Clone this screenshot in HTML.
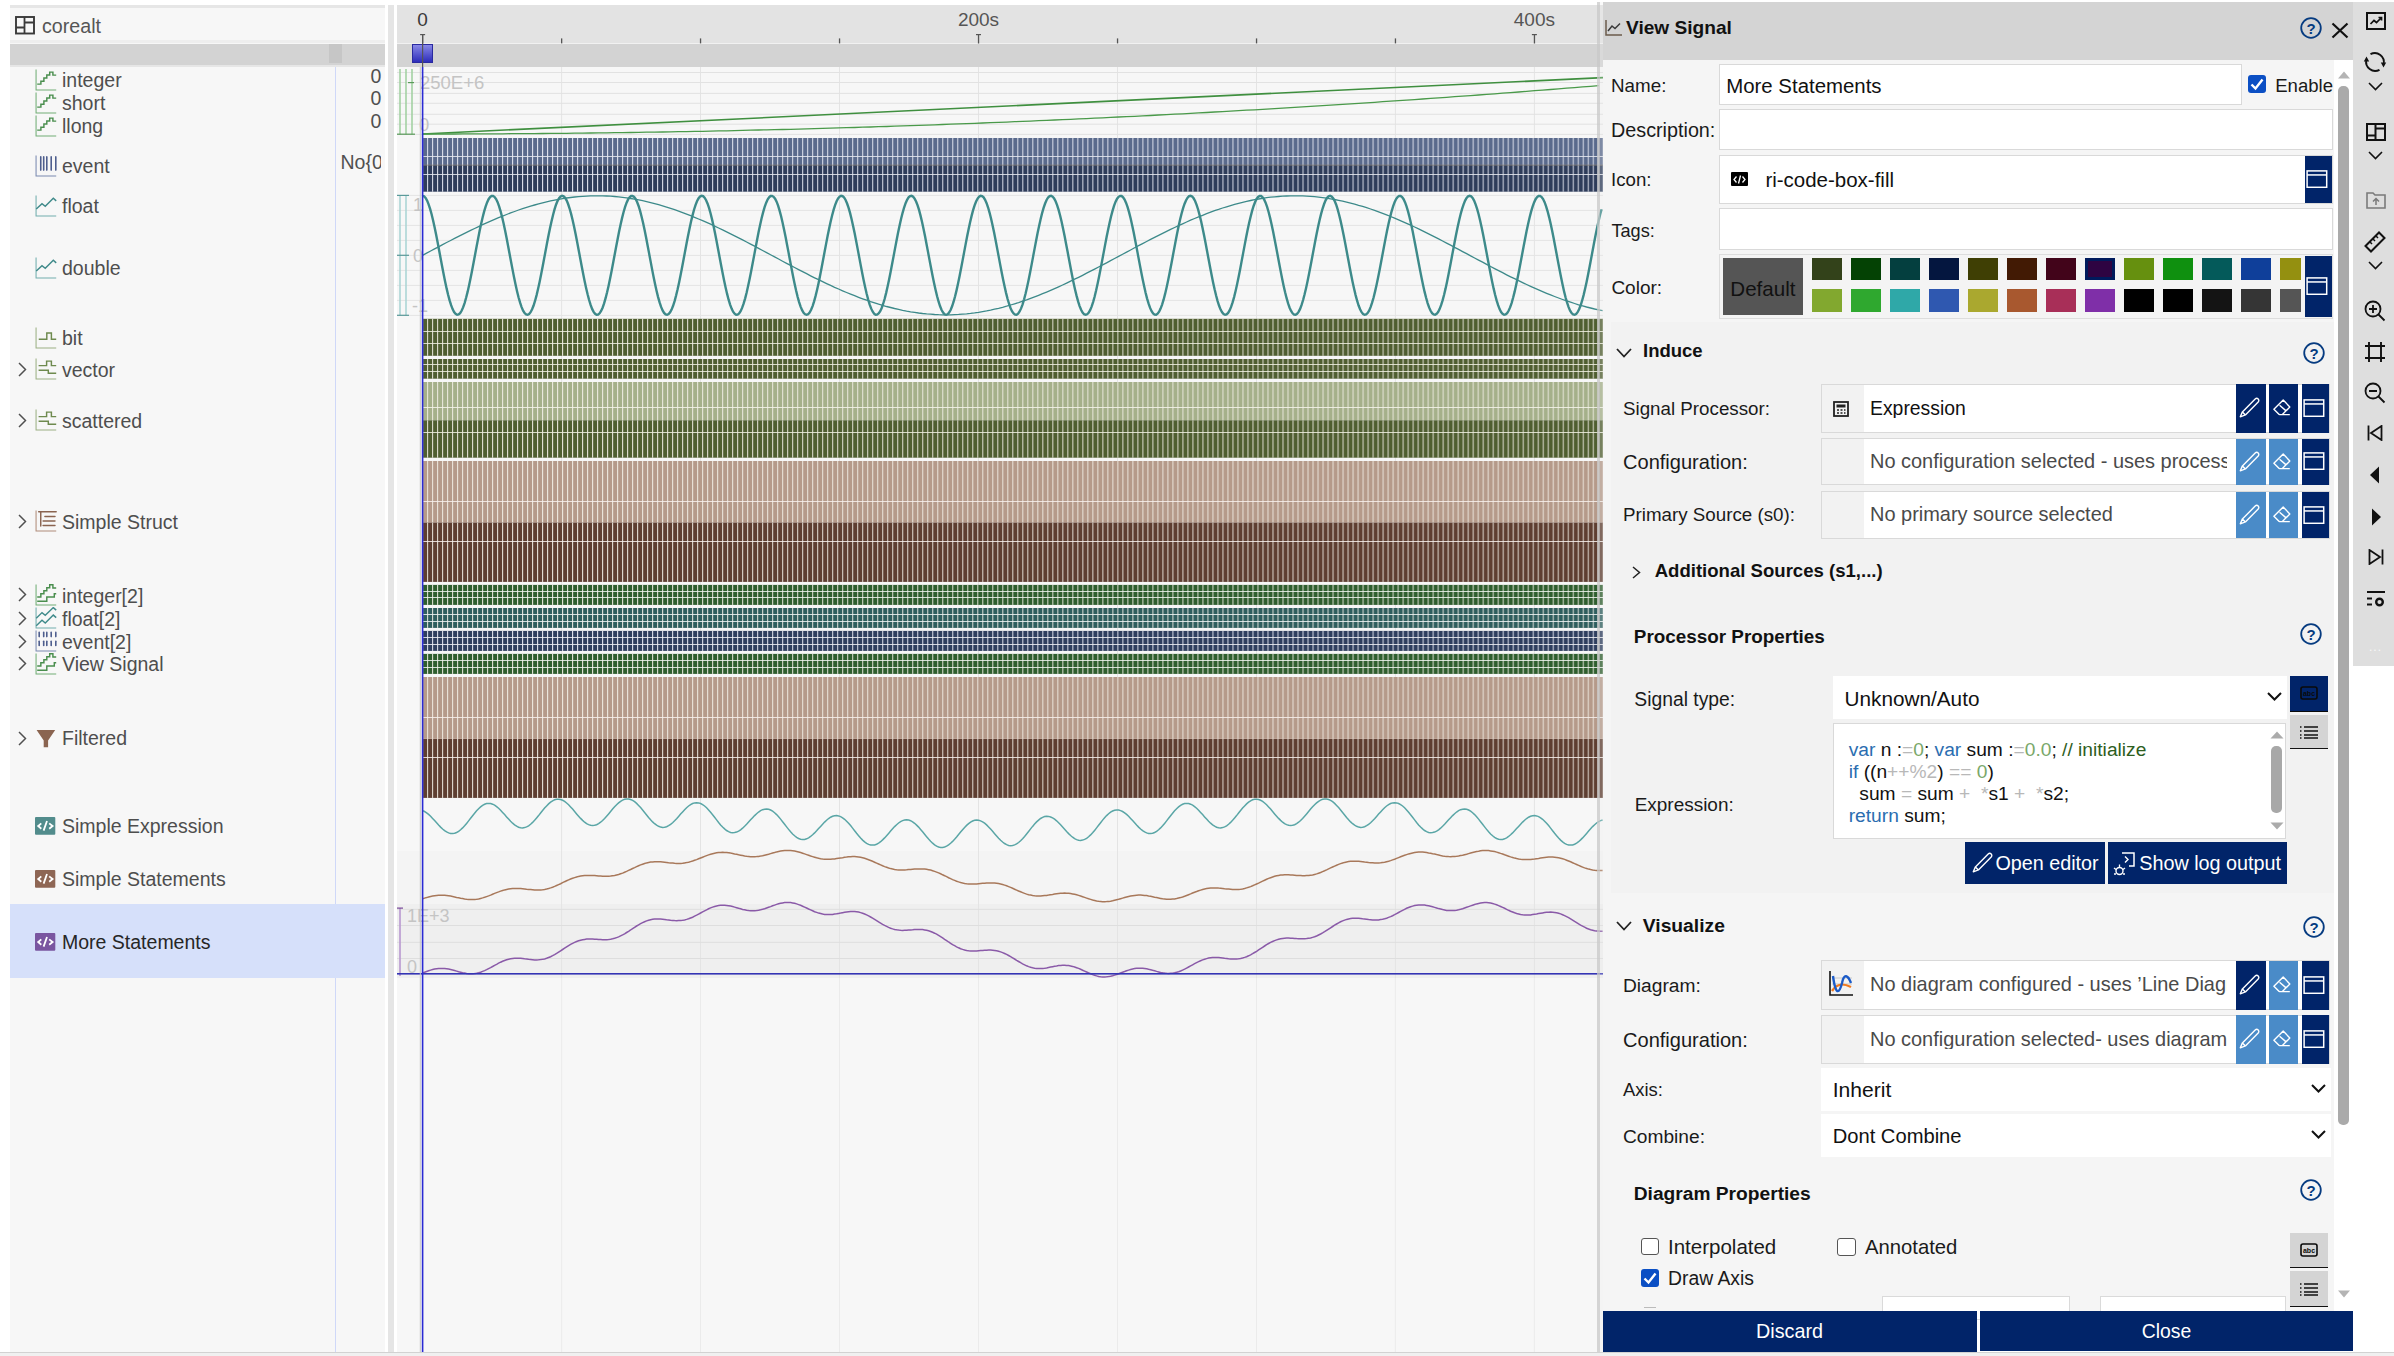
<!DOCTYPE html>
<html><head><meta charset="utf-8"><title>View Signal</title>
<style>
html,body{margin:0;padding:0;background:#ffffff;}
body{position:relative;width:2394px;height:1356px;overflow:hidden;font-family:"Liberation Sans", sans-serif;}
div{box-sizing:content-box;}
</style></head><body>
<div style="position:absolute;left:10px;top:5px;width:375.0px;height:1347.0px;background:#f7f7f7;"></div>
<div style="position:absolute;left:10px;top:5px;width:375.0px;height:3.0px;background:#e6e6e6;"></div>
<div style="position:absolute;left:10px;top:40px;width:375.0px;height:3.0px;background:#eeeeee;"></div>
<div style="position:absolute;left:10px;top:44px;width:375.0px;height:20.5px;background:#d3d3d3;"></div>
<div style="position:absolute;left:10px;top:64.5px;width:375.0px;height:2.5px;background:#e6e6e6;"></div>
<div style="position:absolute;left:329px;top:44px;width:13.0px;height:19.0px;background:#c6c6c6;"></div>
<svg style="position:absolute;left:14.5px;top:15.5px" width="20" height="19" viewBox="0 0 20 19" ><rect x="1" y="1" width="18" height="16.5" fill="none" stroke="#3a3a3a" stroke-width="1.9"/><path d="M9.5 1V17.5M1 11.5H9.5M9.5 6.5H19" fill="none" stroke="#3a3a3a" stroke-width="1.8"/></svg>
<div style="position:absolute;left:42.0px;top:16.6px;font-size:19.67px;line-height:19.67px;color:#555555;font-weight:normal;white-space:nowrap;">corealt</div>
<div style="position:absolute;left:335px;top:67px;width:1.0px;height:1285.0px;background:#cfd8f8;"></div>
<div style="position:absolute;left:10px;top:904px;width:375.0px;height:73.7px;background:#d6e0fa;"></div>
<svg style="position:absolute;left:34.5px;top:68.5px" width="22" height="22" viewBox="0 0 22 22" ><path d="M1.06 0.4V20.9H21.2" fill="none" stroke="#72ae76" stroke-width="1.05"/><path d="M2.2 15.1H5.9V12.3H8.9V9H11.8V5.9H14.7V3.1H17.9V6.1H21.2" fill="none" stroke="#4a8e4e" stroke-width="1.45"/></svg>
<div style="position:absolute;left:62px;top:71.1px;font-size:19.5px;line-height:19.5px;color:#4e4e4e;font-weight:normal;white-space:nowrap;">integer</div>
<svg style="position:absolute;left:34.5px;top:91.5px" width="22" height="22" viewBox="0 0 22 22" ><path d="M1.06 0.4V20.9H21.2" fill="none" stroke="#72ae76" stroke-width="1.05"/><path d="M2.2 15.1H5.9V12.3H8.9V9H11.8V5.9H14.7V3.1H17.9V6.1H21.2" fill="none" stroke="#4a8e4e" stroke-width="1.45"/></svg>
<div style="position:absolute;left:62px;top:94.2px;font-size:19.5px;line-height:19.5px;color:#4e4e4e;font-weight:normal;white-space:nowrap;">short</div>
<svg style="position:absolute;left:34.5px;top:114.5px" width="22" height="22" viewBox="0 0 22 22" ><path d="M1.06 0.4V20.9H21.2" fill="none" stroke="#72ae76" stroke-width="1.05"/><path d="M2.2 15.1H5.9V12.3H8.9V9H11.8V5.9H14.7V3.1H17.9V6.1H21.2" fill="none" stroke="#4a8e4e" stroke-width="1.45"/></svg>
<div style="position:absolute;left:62px;top:117.2px;font-size:19.5px;line-height:19.5px;color:#4e4e4e;font-weight:normal;white-space:nowrap;">llong</div>
<svg style="position:absolute;left:34.5px;top:154.5px" width="22" height="22" viewBox="0 0 22 22" ><path d="M1.06 0.4V20.9H21.2" fill="none" stroke="#7a8ab0" stroke-width="1.05"/><rect x="4.95" y="1.1" width="1.6" height="14.8" rx="0.8" fill="#4e5e8e"/><rect x="7.8999999999999995" y="1.1" width="1.6" height="14.8" rx="0.8" fill="#4e5e8e"/><rect x="11.0" y="1.1" width="1.6" height="14.8" rx="0.8" fill="#4e5e8e"/><rect x="15.399999999999999" y="1.1" width="1.6" height="14.8" rx="0.8" fill="#4e5e8e"/><rect x="20.0" y="1.1" width="1.6" height="14.8" rx="0.8" fill="#4e5e8e"/></svg>
<div style="position:absolute;left:62px;top:156.8px;font-size:19.5px;line-height:19.5px;color:#4e4e4e;font-weight:normal;white-space:nowrap;">event</div>
<svg style="position:absolute;left:34.5px;top:194.5px" width="22" height="22" viewBox="0 0 22 22" ><path d="M1.06 0.4V20.9H21.2" fill="none" stroke="#72aeae" stroke-width="1.05"/><path d="M1.25 14L7 8.6L10.26 11.3L18.3 3.25L21.2 5.9" fill="none" stroke="#3f8a8a" stroke-width="1.45"/></svg>
<div style="position:absolute;left:62px;top:197.4px;font-size:19.5px;line-height:19.5px;color:#4e4e4e;font-weight:normal;white-space:nowrap;">float</div>
<svg style="position:absolute;left:34.5px;top:256.5px" width="22" height="22" viewBox="0 0 22 22" ><path d="M1.06 0.4V20.9H21.2" fill="none" stroke="#72aeae" stroke-width="1.05"/><path d="M1.25 14L7 8.6L10.26 11.3L18.3 3.25L21.2 5.9" fill="none" stroke="#3f8a8a" stroke-width="1.45"/></svg>
<div style="position:absolute;left:62px;top:258.7px;font-size:19.5px;line-height:19.5px;color:#4e4e4e;font-weight:normal;white-space:nowrap;">double</div>
<svg style="position:absolute;left:34.5px;top:326.5px" width="22" height="22" viewBox="0 0 22 22" ><path d="M1.06 0.4V20.9H21.2" fill="none" stroke="#9cb084" stroke-width="1.05"/><path d="M3.74 12.26H11.8V5.9H16.4V12.26H21.2" fill="none" stroke="#6e8a4e" stroke-width="1.45"/></svg>
<div style="position:absolute;left:62px;top:328.8px;font-size:19.5px;line-height:19.5px;color:#4e4e4e;font-weight:normal;white-space:nowrap;">bit</div>
<svg style="position:absolute;left:34.5px;top:358.4px" width="22" height="22" viewBox="0 0 22 22" ><path d="M1.06 0.4V20.9H21.2" fill="none" stroke="#9cb084" stroke-width="1.05"/><path d="M3.6 7.6H11.6V3.1H16.4V7.6H21.2M3.6 12.3H13.3V15.3H21.2" fill="none" stroke="#6e8a4e" stroke-width="1.45"/></svg>
<svg style="position:absolute;left:17.5px;top:362.0px" width="9" height="15" viewBox="0 0 9 15" ><path d="M1 1L7.5 7.5L1 14" fill="none" stroke="#505050" stroke-width="1.45"/></svg>
<div style="position:absolute;left:62px;top:361.0px;font-size:19.5px;line-height:19.5px;color:#4e4e4e;font-weight:normal;white-space:nowrap;">vector</div>
<svg style="position:absolute;left:34.5px;top:409.2px" width="22" height="22" viewBox="0 0 22 22" ><path d="M1.06 0.4V20.9H21.2" fill="none" stroke="#9cb084" stroke-width="1.05"/><path d="M3.6 7.6H11.6V3.1H16.4V7.6H21.2M3.6 12.3H13.3V15.3H21.2" fill="none" stroke="#6e8a4e" stroke-width="1.45"/></svg>
<svg style="position:absolute;left:17.5px;top:412.8px" width="9" height="15" viewBox="0 0 9 15" ><path d="M1 1L7.5 7.5L1 14" fill="none" stroke="#505050" stroke-width="1.45"/></svg>
<div style="position:absolute;left:62px;top:411.7px;font-size:19.5px;line-height:19.5px;color:#4e4e4e;font-weight:normal;white-space:nowrap;">scattered</div>
<svg style="position:absolute;left:34.5px;top:510.3px" width="22" height="22" viewBox="0 0 22 22" ><path d="M1.06 0.4V20.9H21.2" fill="none" stroke="#b08c7a" stroke-width="1.05"/><path d="M3.7 1.7H21.2M5.75 1.7V15.9M9.9 6.4H20M8.1 10.9H20M8.1 15.5H20" fill="none" stroke="#8a6450" stroke-width="1.45" stroke-linecap="round"/></svg>
<svg style="position:absolute;left:17.5px;top:513.9px" width="9" height="15" viewBox="0 0 9 15" ><path d="M1 1L7.5 7.5L1 14" fill="none" stroke="#505050" stroke-width="1.45"/></svg>
<div style="position:absolute;left:62px;top:513.3px;font-size:19.5px;line-height:19.5px;color:#4e4e4e;font-weight:normal;white-space:nowrap;">Simple Struct</div>
<svg style="position:absolute;left:34.5px;top:583.8px" width="22" height="22" viewBox="0 0 22 22" ><path d="M1.06 0.4V20.9H21.2" fill="none" stroke="#72ae76" stroke-width="1.05"/><path d="M2.2 12.9H5.85V9.7H8.9V6.8H11.8V3.7H14.7V0.8H17.9V3.9H21.2M2.2 17.3H11.8V12.9H19.3V9.7H21.2" fill="none" stroke="#4a8e4e" stroke-width="1.45"/></svg>
<svg style="position:absolute;left:17.5px;top:587.4px" width="9" height="15" viewBox="0 0 9 15" ><path d="M1 1L7.5 7.5L1 14" fill="none" stroke="#505050" stroke-width="1.45"/></svg>
<div style="position:absolute;left:62px;top:586.5px;font-size:19.5px;line-height:19.5px;color:#4e4e4e;font-weight:normal;white-space:nowrap;">integer[2]</div>
<svg style="position:absolute;left:34.5px;top:607px" width="22" height="22" viewBox="0 0 22 22" ><path d="M1.06 0.4V20.9H21.2" fill="none" stroke="#72aeae" stroke-width="1.05"/><path d="M1.25 11.2L7 5.6L10.26 8.3L18.3 0.6L21.2 3.1M1.25 18.7L7 13.3L10.26 16L18.3 8.1L21.2 10.6" fill="none" stroke="#3f8a8a" stroke-width="1.45"/></svg>
<svg style="position:absolute;left:17.5px;top:610.6px" width="9" height="15" viewBox="0 0 9 15" ><path d="M1 1L7.5 7.5L1 14" fill="none" stroke="#505050" stroke-width="1.45"/></svg>
<div style="position:absolute;left:62px;top:610.1px;font-size:19.5px;line-height:19.5px;color:#4e4e4e;font-weight:normal;white-space:nowrap;">float[2]</div>
<svg style="position:absolute;left:34.5px;top:630px" width="22" height="22" viewBox="0 0 22 22" ><path d="M1.06 0.4V20.9H21.2" fill="none" stroke="#7a8ab0" stroke-width="1.05"/><rect x="3.4000000000000004" y="1.6" width="1.6" height="5.8" rx="0.8" fill="#4e5e8e"/><rect x="3.4000000000000004" y="10.4" width="1.6" height="5.8" rx="0.8" fill="#4e5e8e"/><rect x="7.8999999999999995" y="1.6" width="1.6" height="5.8" rx="0.8" fill="#4e5e8e"/><rect x="7.8999999999999995" y="10.4" width="1.6" height="5.8" rx="0.8" fill="#4e5e8e"/><rect x="11.0" y="1.6" width="1.6" height="5.8" rx="0.8" fill="#4e5e8e"/><rect x="11.0" y="10.4" width="1.6" height="5.8" rx="0.8" fill="#4e5e8e"/><rect x="15.399999999999999" y="1.6" width="1.6" height="5.8" rx="0.8" fill="#4e5e8e"/><rect x="15.399999999999999" y="10.4" width="1.6" height="5.8" rx="0.8" fill="#4e5e8e"/><rect x="20.0" y="1.6" width="1.6" height="5.8" rx="0.8" fill="#4e5e8e"/><rect x="20.0" y="10.4" width="1.6" height="5.8" rx="0.8" fill="#4e5e8e"/></svg>
<svg style="position:absolute;left:17.5px;top:633.6px" width="9" height="15" viewBox="0 0 9 15" ><path d="M1 1L7.5 7.5L1 14" fill="none" stroke="#505050" stroke-width="1.45"/></svg>
<div style="position:absolute;left:62px;top:632.6px;font-size:19.5px;line-height:19.5px;color:#4e4e4e;font-weight:normal;white-space:nowrap;">event[2]</div>
<svg style="position:absolute;left:34.5px;top:652.5px" width="22" height="22" viewBox="0 0 22 22" ><path d="M1.06 0.4V20.9H21.2" fill="none" stroke="#72ae76" stroke-width="1.05"/><path d="M2.2 12.9H5.85V9.7H8.9V6.8H11.8V3.7H14.7V0.8H17.9V3.9H21.2M2.2 17.3H11.8V12.9H19.3V9.7H21.2" fill="none" stroke="#4a8e4e" stroke-width="1.45"/></svg>
<svg style="position:absolute;left:17.5px;top:656.1px" width="9" height="15" viewBox="0 0 9 15" ><path d="M1 1L7.5 7.5L1 14" fill="none" stroke="#505050" stroke-width="1.45"/></svg>
<div style="position:absolute;left:62px;top:655.3px;font-size:19.5px;line-height:19.5px;color:#4e4e4e;font-weight:normal;white-space:nowrap;">View Signal</div>
<svg style="position:absolute;left:35.5px;top:729.3px" width="20" height="19" viewBox="0 0 20 19" ><path d="M0.6 1.1H19.2L12.1 11.6V18.3H7.7V11.6Z" fill="#8a6450"/></svg>
<svg style="position:absolute;left:17.5px;top:731.2px" width="9" height="15" viewBox="0 0 9 15" ><path d="M1 1L7.5 7.5L1 14" fill="none" stroke="#505050" stroke-width="1.45"/></svg>
<div style="position:absolute;left:62px;top:729.3px;font-size:19.5px;line-height:19.5px;color:#4e4e4e;font-weight:normal;white-space:nowrap;">Filtered</div>
<svg style="position:absolute;left:35.2px;top:817px" width="21" height="18" viewBox="0 0 21 18" ><rect x="0" y="0" width="20.3" height="17.8" rx="1" fill="#528c8c"/><path d="M6.3 6.35L3.2 9L6.3 11.7M14.2 6.35L17.6 9L14.2 11.7M12 4L8.6 13.6" fill="none" stroke="#fff" stroke-width="1.8"/></svg>
<div style="position:absolute;left:62px;top:817.0px;font-size:19.5px;line-height:19.5px;color:#4e4e4e;font-weight:normal;white-space:nowrap;">Simple Expression</div>
<svg style="position:absolute;left:35.2px;top:870px" width="21" height="18" viewBox="0 0 21 18" ><rect x="0" y="0" width="20.3" height="17.8" rx="1" fill="#8e6654"/><path d="M6.3 6.35L3.2 9L6.3 11.7M14.2 6.35L17.6 9L14.2 11.7M12 4L8.6 13.6" fill="none" stroke="#fff" stroke-width="1.8"/></svg>
<div style="position:absolute;left:62px;top:869.7px;font-size:19.5px;line-height:19.5px;color:#4e4e4e;font-weight:normal;white-space:nowrap;">Simple Statements</div>
<svg style="position:absolute;left:35.2px;top:932.7px" width="21" height="18" viewBox="0 0 21 18" ><rect x="0" y="0" width="20.3" height="17.8" rx="1" fill="#7a56a0"/><path d="M6.3 6.35L3.2 9L6.3 11.7M14.2 6.35L17.6 9L14.2 11.7M12 4L8.6 13.6" fill="none" stroke="#fff" stroke-width="1.8"/></svg>
<div style="position:absolute;left:62px;top:932.7px;font-size:19.5px;line-height:19.5px;color:#262626;font-weight:normal;white-space:nowrap;">More Statements</div>
<div style="position:absolute;left:370.5px;top:66.5px;font-size:19.5px;line-height:19.5px;color:#505050;font-weight:normal;white-space:nowrap;">0</div>
<div style="position:absolute;left:370.5px;top:89.3px;font-size:19.5px;line-height:19.5px;color:#505050;font-weight:normal;white-space:nowrap;">0</div>
<div style="position:absolute;left:370.5px;top:112.2px;font-size:19.5px;line-height:19.5px;color:#505050;font-weight:normal;white-space:nowrap;">0</div>
<div style="position:absolute;left:340.5px;top:153.2px;font-size:19.5px;line-height:19.5px;color:#505050;font-weight:normal;white-space:nowrap;width:40px;overflow:hidden;">No{0</div>
<div style="position:absolute;left:388px;top:5px;width:6.0px;height:1347.0px;background:#e5e5e5;"></div>
<svg width="1206" height="1352" viewBox="397 0 1206 1352" style="position:absolute;left:397px;top:0">
<defs>
<pattern id="st" x="422" y="0" width="5.003" height="10" patternUnits="userSpaceOnUse"><rect x="0" y="0" width="1" height="10" fill="#e4e8f2" opacity="0.95"/></pattern>
<pattern id="st2" x="422" y="0" width="5.003" height="10" patternUnits="userSpaceOnUse"><rect x="0" y="0" width="1" height="10" fill="#f2efe6" opacity="0.9"/></pattern>
<linearGradient id="thumb" x1="0" y1="0" x2="0" y2="1"><stop offset="0" stop-color="#8a8ae8"/><stop offset="1" stop-color="#2a2ab8"/></linearGradient>
</defs>
<rect x="397" y="5" width="1206" height="38.5" fill="#e3e3e3"/>
<rect x="397" y="44" width="1206" height="23" fill="#d3d3d3"/>
<rect x="397" y="67" width="1206" height="1285" fill="#f7f7f7"/>
<rect x="397" y="851" width="1206" height="53" fill="#f4f4f4"/>
<rect x="397" y="904" width="1206" height="74" fill="#efefef"/>
<rect x="422.0" y="34" width="1.3" height="9.5" fill="#555"/>
<rect x="420.1" y="34" width="5" height="1.2" fill="#555"/>
<rect x="422.1" y="67" width="1" height="911" fill="#e4e4e4"/>
<rect x="422.1" y="978" width="1" height="374" fill="#ebebeb"/>
<rect x="561.0" y="38.4" width="1.3" height="5" fill="#555"/>
<rect x="561.1" y="67" width="1" height="911" fill="#e4e4e4"/>
<rect x="561.1" y="978" width="1" height="374" fill="#ebebeb"/>
<rect x="699.9" y="38.4" width="1.3" height="5" fill="#555"/>
<rect x="700.0" y="67" width="1" height="911" fill="#e4e4e4"/>
<rect x="700.0" y="978" width="1" height="374" fill="#ebebeb"/>
<rect x="838.9" y="38.4" width="1.3" height="5" fill="#555"/>
<rect x="839.0" y="67" width="1" height="911" fill="#e4e4e4"/>
<rect x="839.0" y="978" width="1" height="374" fill="#ebebeb"/>
<rect x="977.9" y="34" width="1.3" height="9.5" fill="#555"/>
<rect x="976.0" y="34" width="5" height="1.2" fill="#555"/>
<rect x="978.0" y="67" width="1" height="911" fill="#e4e4e4"/>
<rect x="978.0" y="978" width="1" height="374" fill="#ebebeb"/>
<rect x="1116.9" y="38.4" width="1.3" height="5" fill="#555"/>
<rect x="1117.0" y="67" width="1" height="911" fill="#e4e4e4"/>
<rect x="1117.0" y="978" width="1" height="374" fill="#ebebeb"/>
<rect x="1255.9" y="38.4" width="1.3" height="5" fill="#555"/>
<rect x="1256.0" y="67" width="1" height="911" fill="#e4e4e4"/>
<rect x="1256.0" y="978" width="1" height="374" fill="#ebebeb"/>
<rect x="1394.8" y="38.4" width="1.3" height="5" fill="#555"/>
<rect x="1394.9" y="67" width="1" height="911" fill="#e4e4e4"/>
<rect x="1394.9" y="978" width="1" height="374" fill="#ebebeb"/>
<rect x="1533.8" y="34" width="1.3" height="9.5" fill="#555"/>
<rect x="1531.9" y="34" width="5" height="1.2" fill="#555"/>
<rect x="1533.9" y="67" width="1" height="911" fill="#e4e4e4"/>
<rect x="1533.9" y="978" width="1" height="374" fill="#ebebeb"/>
<text x="422.6" y="26" font-family="Liberation Sans" font-size="19" fill="#3a3a3a" text-anchor="middle">0</text>
<text x="978.5" y="26" font-family="Liberation Sans" font-size="19" fill="#555" text-anchor="middle">200s</text>
<text x="1534.4" y="26" font-family="Liberation Sans" font-size="19" fill="#555" text-anchor="middle">400s</text>
<rect x="412.5" y="44.5" width="20" height="18" fill="url(#thumb)" stroke="#2a2aa0" stroke-width="1"/>
<rect x="397" y="72.0" width="1206" height="1" fill="#e2e2e2"/>
<rect x="397" y="82.0" width="1206" height="1" fill="#e2e2e2"/>
<rect x="397" y="92.9" width="1206" height="1" fill="#e2e2e2"/>
<rect x="397" y="102.8" width="1206" height="1" fill="#e2e2e2"/>
<rect x="397" y="113.8" width="1206" height="1" fill="#e2e2e2"/>
<rect x="397" y="123.7" width="1206" height="1" fill="#e2e2e2"/>
<rect x="397" y="133.9" width="1206" height="1" fill="#e2e2e2"/>
<rect x="399.25" y="69" width="1.5" height="65.5" fill="#9ed09e"/>
<rect x="397" y="133.6" width="6" height="1.2" fill="#5a9a5a"/>
<rect x="405.25" y="69" width="1.5" height="65.5" fill="#9ed09e"/>
<rect x="403" y="133.6" width="6" height="1.2" fill="#5a9a5a"/>
<rect x="411.25" y="69" width="1.5" height="65.5" fill="#9ed09e"/>
<rect x="409" y="133.6" width="6" height="1.2" fill="#5a9a5a"/>
<rect x="408" y="82" width="6" height="1.2" fill="#5a9a5a"/>
<text x="420" y="89" font-family="Liberation Sans" font-size="18.5" fill="#c4c4c4">250E+6</text>
<text x="419" y="131" font-family="Liberation Sans" font-size="18.5" fill="#c4c4c4">0</text>
<line x1="422.6" y1="134" x2="1603" y2="77.6" stroke="#3f8f3f" stroke-width="1.6"/>
<polyline fill="none" stroke="#4a9a4a" stroke-width="1.3" points="422.6,134 430.6,134 438.6,134 446.6,134 454.6,134 462.6,133.9 470.6,133.9 478.6,133.9 486.6,133.9 494.6,133.8 502.6,133.8 510.6,133.7 518.6,133.7 526.6,133.6 534.6,133.6 542.6,133.5 550.6,133.4 558.6,133.4 566.6,133.3 574.6,133.2 582.6,133.1 590.6,133 598.6,132.9 606.6,132.8 614.6,132.7 622.6,132.6 630.6,132.5 638.6,132.4 646.6,132.2 654.6,132.1 662.6,132 670.6,131.8 678.6,131.7 686.6,131.6 694.6,131.4 702.6,131.3 710.6,131.1 718.6,130.9 726.6,130.8 734.6,130.6 742.6,130.4 750.6,130.2 758.6,130 766.6,129.9 774.6,129.7 782.6,129.5 790.6,129.3 798.6,129.1 806.6,128.8 814.6,128.6 822.6,128.4 830.6,128.2 838.6,127.9 846.6,127.7 854.6,127.5 862.6,127.2 870.6,127 878.6,126.7 886.6,126.5 894.6,126.2 902.6,125.9 910.6,125.7 918.6,125.4 926.6,125.1 934.6,124.8 942.6,124.5 950.6,124.2 958.6,123.9 966.6,123.6 974.6,123.3 982.6,123 990.6,122.7 998.6,122.4 1006.6,122.1 1014.6,121.7 1022.6,121.4 1030.6,121.1 1038.6,120.7 1046.6,120.4 1054.6,120 1062.6,119.7 1070.6,119.3 1078.6,118.9 1086.6,118.6 1094.6,118.2 1102.6,117.8 1110.6,117.4 1118.6,117 1126.6,116.7 1134.6,116.3 1142.6,115.9 1150.6,115.5 1158.6,115 1166.6,114.6 1174.6,114.2 1182.6,113.8 1190.6,113.4 1198.6,112.9 1206.6,112.5 1214.6,112 1222.6,111.6 1230.6,111.1 1238.6,110.7 1246.6,110.2 1254.6,109.8 1262.6,109.3 1270.6,108.8 1278.6,108.4 1286.6,107.9 1294.6,107.4 1302.6,106.9 1310.6,106.4 1318.6,105.9 1326.6,105.4 1334.6,104.9 1342.6,104.4 1350.6,103.9 1358.6,103.3 1366.6,102.8 1374.6,102.3 1382.6,101.7 1390.6,101.2 1398.6,100.7 1406.6,100.1 1414.6,99.6 1422.6,99 1430.6,98.4 1438.6,97.9 1446.6,97.3 1454.6,96.7 1462.6,96.1 1470.6,95.6 1478.6,95 1486.6,94.4 1494.6,93.8 1502.6,93.2 1510.6,92.6 1518.6,92 1526.6,91.3 1534.6,90.7 1542.6,90.1 1550.6,89.5 1558.6,88.8 1566.6,88.2 1574.6,87.6 1582.6,86.9 1590.6,86.3 1598.6,85.6"/>
<rect x="422.6" y="138" width="1180.4" height="27.1" fill="#5a6a8c"/>
<rect x="422.6" y="138" width="1180.4" height="27.1" fill="url(#st)"/>
<rect x="422.6" y="156" width="1180.4" height="1" fill="#e6e9f0" opacity="0.85"/>
<rect x="422.6" y="165.1" width="1180.4" height="26.6" fill="#2e3c5a"/>
<rect x="422.6" y="165.1" width="1180.4" height="26.6" fill="url(#st)"/>
<rect x="422.6" y="174" width="1180.4" height="1" fill="#e6e9f0" opacity="0.85"/>
<rect x="422.6" y="164.6" width="1180.4" height="1" fill="#8a8070" opacity="0.6"/>
<rect x="397" y="194.9" width="1206" height="1" fill="#e4e4e4"/>
<rect x="397" y="209.9" width="1206" height="1" fill="#e4e4e4"/>
<rect x="397" y="224.9" width="1206" height="1" fill="#e4e4e4"/>
<rect x="397" y="239.9" width="1206" height="1" fill="#e4e4e4"/>
<rect x="397" y="254.9" width="1206" height="1" fill="#e4e4e4"/>
<rect x="397" y="269.9" width="1206" height="1" fill="#e4e4e4"/>
<rect x="397" y="284.9" width="1206" height="1" fill="#e4e4e4"/>
<rect x="397" y="299.9" width="1206" height="1" fill="#e4e4e4"/>
<rect x="397" y="314.9" width="1206" height="1" fill="#e4e4e4"/>
<rect x="399.25" y="195.4" width="1.5" height="120" fill="#a8d4d4"/>
<rect x="405.25" y="195.4" width="1.5" height="120" fill="#a8d4d4"/>
<rect x="397" y="194.8" width="12" height="1.2" fill="#5a9a9a"/>
<rect x="397" y="254.70000000000002" width="12" height="1.2" fill="#5a9a9a"/>
<rect x="397" y="314.7" width="12" height="1.2" fill="#5a9a9a"/>
<text x="413" y="211" font-family="Liberation Sans" font-size="18" fill="#c4c4c4">1</text>
<text x="413" y="262" font-family="Liberation Sans" font-size="18" fill="#c4c4c4">0</text>
<text x="412" y="312" font-family="Liberation Sans" font-size="18" fill="#c4c4c4">-1</text>
<polyline fill="none" stroke="#3d8a8a" stroke-width="2.4" points="422.6,195.8 424.1,196.3 425.6,198 427.1,200.6 428.6,204.3 430.1,208.9 431.6,214.3 433.1,220.5 434.6,227.3 436.1,234.6 437.6,242.3 439.1,250.2 440.6,258.2 442.1,266.2 443.6,274 445.1,281.4 446.6,288.4 448.1,294.7 449.6,300.4 451.1,305.2 452.6,309.1 454.1,312 455.6,313.9 457.1,314.8 458.6,314.5 460.1,313.2 461.6,310.8 463.1,307.4 464.6,303.1 466.1,297.8 467.6,291.9 469.1,285.2 470.6,278 472.1,270.4 473.6,262.5 475.1,254.5 476.6,246.5 478.1,238.7 479.6,231.1 481.1,224 482.6,217.5 484.1,211.6 485.6,206.6 487.1,202.4 488.6,199.2 490.1,197.1 491.6,196 493.1,195.9 494.6,197 496.1,199.1 497.6,202.2 499.1,206.3 500.6,211.3 502.1,217.1 503.6,223.6 505.1,230.6 506.6,238.1 508.1,246 509.6,254 511.1,262 512.6,269.9 514.1,277.5 515.6,284.7 517.1,291.4 518.6,297.5 520.1,302.7 521.6,307.1 523.1,310.6 524.6,313.1 526.1,314.5 527.6,314.8 529.1,314 530.6,312.2 532.1,309.3 533.6,305.5 535.1,300.7 536.6,295.1 538.1,288.8 539.6,281.9 541.1,274.5 542.6,266.7 544.1,258.8 545.6,250.8 547.1,242.8 548.6,235.1 550.1,227.7 551.6,220.9 553.1,214.7 554.6,209.2 556.1,204.5 557.6,200.8 559.1,198.1 560.6,196.4 562.1,195.8 563.6,196.3 565.1,197.8 566.6,200.4 568.1,204 569.6,208.5 571.1,213.9 572.6,220 574.1,226.8 575.6,234.1 577.1,241.8 578.6,249.7 580.1,257.7 581.6,265.7 583.1,273.5 584.6,280.9 586.1,287.9 587.6,294.3 589.1,300 590.6,304.9 592.1,308.9 593.6,311.9 595.1,313.8 596.6,314.7 598.1,314.6 599.6,313.3 601.1,311 602.6,307.7 604.1,303.4 605.6,298.2 607.1,292.3 608.6,285.7 610.1,278.5 611.6,270.9 613.1,263 614.6,255 616.1,247 617.6,239.2 619.1,231.6 620.6,224.5 622.1,217.9 623.6,212 625.1,206.9 626.6,202.7 628.1,199.4 629.6,197.2 631.1,196 632.6,195.9 634.1,196.9 635.6,198.9 637.1,202 638.6,206 640.1,210.9 641.6,216.7 643.1,223.1 644.6,230.1 646.1,237.6 647.6,245.4 649.1,253.4 650.6,261.4 652.1,269.4 653.6,277 655.1,284.3 656.6,291 658.1,297.1 659.6,302.4 661.1,306.9 662.6,310.4 664.1,312.9 665.6,314.4 667.1,314.8 668.6,314.1 670.1,312.3 671.6,309.6 673.1,305.8 674.6,301.1 676.1,295.5 677.6,289.3 679.1,282.4 680.6,275 682.1,267.3 683.6,259.3 685.1,251.3 686.6,243.3 688.1,235.6 689.6,228.2 691.1,221.3 692.6,215.1 694.1,209.5 695.6,204.8 697.1,201 698.6,198.3 700.1,196.5 701.6,195.8 703.1,196.2 704.6,197.7 706.1,200.2 707.6,203.7 709.1,208.2 710.6,213.5 712.1,219.6 713.6,226.3 715.1,233.6 716.6,241.2 718.1,249.2 719.6,257.2 721.1,265.2 722.6,273 724.1,280.5 725.6,287.5 727.1,293.9 728.6,299.7 730.1,304.6 731.6,308.6 733.1,311.7 734.6,313.7 736.1,314.7 737.6,314.6 739.1,313.4 740.6,311.2 742.1,307.9 743.6,303.7 745.1,298.6 746.6,292.7 748.1,286.1 749.6,279 751.1,271.4 752.6,263.6 754.1,255.6 755.6,247.6 757.1,239.7 758.6,232.1 760.1,224.9 761.6,218.3 763.1,212.4 764.6,207.2 766.1,202.9 767.6,199.6 769.1,197.3 770.6,196 772.1,195.9 773.6,196.8 775.1,198.7 776.6,201.7 778.1,205.7 779.6,210.6 781.1,216.3 782.6,222.7 784.1,229.7 785.6,237.1 787.1,244.9 788.6,252.9 790.1,260.9 791.6,268.8 793.1,276.5 794.6,283.8 796.1,290.6 797.6,296.7 799.1,302.1 800.6,306.6 802.1,310.2 803.6,312.8 805.1,314.3 806.6,314.8 808.1,314.2 809.6,312.5 811.1,309.8 812.6,306.1 814.1,301.4 815.6,295.9 817.1,289.7 818.6,282.9 820.1,275.5 821.6,267.8 823.1,259.8 824.6,251.8 826.1,243.9 827.6,236.1 829.1,228.7 830.6,221.8 832.1,215.5 833.6,209.9 835.1,205.1 836.6,201.3 838.1,198.4 839.6,196.6 841.1,195.8 842.6,196.1 844.1,197.5 845.6,200 847.1,203.5 848.6,207.9 850.1,213.1 851.6,219.2 853.1,225.9 854.6,233.1 856.1,240.7 857.6,248.6 859.1,256.6 860.6,264.6 862.1,272.5 863.6,280 865.1,287 866.6,293.5 868.1,299.3 869.6,304.3 871.1,308.4 872.6,311.5 874.1,313.6 875.6,314.7 877.1,314.6 878.6,313.5 880.1,311.4 881.6,308.2 883.1,304 884.6,299 886.1,293.1 887.6,286.6 889.1,279.5 890.6,271.9 892.1,264.1 893.6,256.1 895.1,248.1 896.6,240.2 898.1,232.6 899.6,225.4 901.1,218.7 902.6,212.8 904.1,207.5 905.6,203.2 907.1,199.8 908.6,197.4 910.1,196.1 911.6,195.8 913.1,196.7 914.6,198.6 916.1,201.5 917.6,205.4 919.1,210.2 920.6,215.9 922.1,222.2 923.6,229.2 925.1,236.6 926.6,244.4 928.1,252.4 929.6,260.4 931.1,268.3 932.6,276 934.1,283.3 935.6,290.1 937.1,296.3 938.6,301.7 940.1,306.3 941.6,310 943.1,312.6 944.6,314.3 946.1,314.8 947.6,314.3 949.1,312.6 950.6,310 952.1,306.3 953.6,301.7 955.1,296.3 956.6,290.1 958.1,283.3 959.6,276 961.1,268.3 962.6,260.4 964.1,252.4 965.6,244.4 967.1,236.6 968.6,229.2 970.1,222.2 971.6,215.9 973.1,210.2 974.6,205.4 976.1,201.5 977.6,198.6 979.1,196.7 980.6,195.8 982.1,196.1 983.6,197.4 985.1,199.8 986.6,203.2 988.1,207.5 989.6,212.8 991.1,218.7 992.6,225.4 994.1,232.6 995.6,240.2 997.1,248.1 998.6,256.1 1000.1,264.1 1001.6,271.9 1003.1,279.5 1004.6,286.6 1006.1,293.1 1007.6,299 1009.1,304 1010.6,308.2 1012.1,311.4 1013.6,313.5 1015.1,314.6 1016.6,314.7 1018.1,313.6 1019.6,311.5 1021.1,308.4 1022.6,304.3 1024.1,299.3 1025.6,293.5 1027.1,287 1028.6,280 1030.1,272.5 1031.6,264.6 1033.1,256.6 1034.6,248.6 1036.1,240.7 1037.6,233.1 1039.1,225.9 1040.6,219.2 1042.1,213.1 1043.6,207.9 1045.1,203.5 1046.6,200 1048.1,197.5 1049.6,196.1 1051.1,195.8 1052.6,196.6 1054.1,198.4 1055.6,201.3 1057.1,205.1 1058.6,209.9 1060.1,215.5 1061.6,221.8 1063.1,228.7 1064.6,236.1 1066.1,243.9 1067.6,251.8 1069.1,259.8 1070.6,267.8 1072.1,275.5 1073.6,282.9 1075.1,289.7 1076.6,295.9 1078.1,301.4 1079.6,306.1 1081.1,309.8 1082.6,312.5 1084.1,314.2 1085.6,314.8 1087.1,314.3 1088.6,312.8 1090.1,310.2 1091.6,306.6 1093.1,302.1 1094.6,296.7 1096.1,290.6 1097.6,283.8 1099.1,276.5 1100.6,268.8 1102.1,260.9 1103.6,252.9 1105.1,244.9 1106.6,237.1 1108.1,229.7 1109.6,222.7 1111.1,216.3 1112.6,210.6 1114.1,205.7 1115.6,201.7 1117.1,198.7 1118.6,196.8 1120.1,195.9 1121.6,196 1123.1,197.3 1124.6,199.6 1126.1,202.9 1127.6,207.2 1129.1,212.4 1130.6,218.3 1132.1,224.9 1133.6,232.1 1135.1,239.7 1136.6,247.6 1138.1,255.6 1139.6,263.6 1141.1,271.4 1142.6,279 1144.1,286.1 1145.6,292.7 1147.1,298.6 1148.6,303.7 1150.1,307.9 1151.6,311.2 1153.1,313.4 1154.6,314.6 1156.1,314.7 1157.6,313.7 1159.1,311.7 1160.6,308.6 1162.1,304.6 1163.6,299.7 1165.1,293.9 1166.6,287.5 1168.1,280.5 1169.6,273 1171.1,265.2 1172.6,257.2 1174.1,249.2 1175.6,241.2 1177.1,233.6 1178.6,226.3 1180.1,219.6 1181.6,213.5 1183.1,208.2 1184.6,203.7 1186.1,200.2 1187.6,197.7 1189.1,196.2 1190.6,195.8 1192.1,196.5 1193.6,198.3 1195.1,201 1196.6,204.8 1198.1,209.5 1199.6,215.1 1201.1,221.3 1202.6,228.2 1204.1,235.6 1205.6,243.3 1207.1,251.3 1208.6,259.3 1210.1,267.3 1211.6,275 1213.1,282.4 1214.6,289.3 1216.1,295.5 1217.6,301.1 1219.1,305.8 1220.6,309.6 1222.1,312.3 1223.6,314.1 1225.1,314.8 1226.6,314.4 1228.1,312.9 1229.6,310.4 1231.1,306.9 1232.6,302.4 1234.1,297.1 1235.6,291 1237.1,284.3 1238.6,277 1240.1,269.4 1241.6,261.4 1243.1,253.4 1244.6,245.4 1246.1,237.6 1247.6,230.1 1249.1,223.1 1250.6,216.7 1252.1,210.9 1253.6,206 1255.1,202 1256.6,198.9 1258.1,196.9 1259.6,195.9 1261.1,196 1262.6,197.2 1264.1,199.4 1265.6,202.7 1267.1,206.9 1268.6,212 1270.1,217.9 1271.6,224.5 1273.1,231.6 1274.6,239.2 1276.1,247 1277.6,255 1279.1,263 1280.6,270.9 1282.1,278.5 1283.6,285.7 1285.1,292.3 1286.6,298.2 1288.1,303.4 1289.6,307.7 1291.1,311 1292.6,313.3 1294.1,314.6 1295.6,314.7 1297.1,313.8 1298.6,311.9 1300.1,308.9 1301.6,304.9 1303.1,300 1304.6,294.3 1306.1,287.9 1307.6,280.9 1309.1,273.5 1310.6,265.7 1312.1,257.7 1313.6,249.7 1315.1,241.8 1316.6,234.1 1318.1,226.8 1319.6,220 1321.1,213.9 1322.6,208.5 1324.1,204 1325.6,200.4 1327.1,197.8 1328.6,196.3 1330.1,195.8 1331.6,196.4 1333.1,198.1 1334.6,200.8 1336.1,204.5 1337.6,209.2 1339.1,214.7 1340.6,220.9 1342.1,227.7 1343.6,235.1 1345.1,242.8 1346.6,250.8 1348.1,258.8 1349.6,266.7 1351.1,274.5 1352.6,281.9 1354.1,288.8 1355.6,295.1 1357.1,300.7 1358.6,305.5 1360.1,309.3 1361.6,312.2 1363.1,314 1364.6,314.8 1366.1,314.5 1367.6,313.1 1369.1,310.6 1370.6,307.1 1372.1,302.7 1373.6,297.5 1375.1,291.4 1376.6,284.7 1378.1,277.5 1379.6,269.9 1381.1,262 1382.6,254 1384.1,246 1385.6,238.1 1387.1,230.6 1388.6,223.6 1390.1,217.1 1391.6,211.3 1393.1,206.3 1394.6,202.2 1396.1,199.1 1397.6,197 1399.1,195.9 1400.6,196 1402.1,197.1 1403.6,199.2 1405.1,202.4 1406.6,206.6 1408.1,211.6 1409.6,217.5 1411.1,224 1412.6,231.1 1414.1,238.7 1415.6,246.5 1417.1,254.5 1418.6,262.5 1420.1,270.4 1421.6,278 1423.1,285.2 1424.6,291.9 1426.1,297.8 1427.6,303.1 1429.1,307.4 1430.6,310.8 1432.1,313.2 1433.6,314.5 1435.1,314.8 1436.6,313.9 1438.1,312 1439.6,309.1 1441.1,305.2 1442.6,300.4 1444.1,294.7 1445.6,288.4 1447.1,281.4 1448.6,274 1450.1,266.2 1451.6,258.2 1453.1,250.2 1454.6,242.3 1456.1,234.6 1457.6,227.3 1459.1,220.5 1460.6,214.3 1462.1,208.9 1463.6,204.3 1465.1,200.6 1466.6,198 1468.1,196.3 1469.6,195.8 1471.1,196.3 1472.6,198 1474.1,200.6 1475.6,204.3 1477.1,208.9 1478.6,214.3 1480.1,220.5 1481.6,227.3 1483.1,234.6 1484.6,242.3 1486.1,250.2 1487.6,258.2 1489.1,266.2 1490.6,274 1492.1,281.4 1493.6,288.4 1495.1,294.7 1496.6,300.4 1498.1,305.2 1499.6,309.1 1501.1,312 1502.6,313.9 1504.1,314.8 1505.6,314.5 1507.1,313.2 1508.6,310.8 1510.1,307.4 1511.6,303.1 1513.1,297.8 1514.6,291.9 1516.1,285.2 1517.6,278 1519.1,270.4 1520.6,262.5 1522.1,254.5 1523.6,246.5 1525.1,238.7 1526.6,231.1 1528.1,224 1529.6,217.5 1531.1,211.6 1532.6,206.6 1534.1,202.4 1535.6,199.2 1537.1,197.1 1538.6,196 1540.1,195.9 1541.6,197 1543.1,199.1 1544.6,202.2 1546.1,206.3 1547.6,211.3 1549.1,217.1 1550.6,223.6 1552.1,230.6 1553.6,238.1 1555.1,246 1556.6,254 1558.1,262 1559.6,269.9 1561.1,277.5 1562.6,284.7 1564.1,291.4 1565.6,297.5 1567.1,302.7 1568.6,307.1 1570.1,310.6 1571.6,313.1 1573.1,314.5 1574.6,314.8 1576.1,314 1577.6,312.2 1579.1,309.3 1580.6,305.5 1582.1,300.7 1583.6,295.1 1585.1,288.8 1586.6,281.9 1588.1,274.5 1589.6,266.7 1591.1,258.8 1592.6,250.8 1594.1,242.8 1595.6,235.1 1597.1,227.7 1598.6,220.9 1600.1,214.7 1601.6,209.2"/>
<polyline fill="none" stroke="#3d8a8a" stroke-width="1.3" points="422.6,255.3 426.6,253.2 430.6,251 434.6,248.9 438.6,246.8 442.6,244.6 446.6,242.5 450.6,240.5 454.6,238.4 458.6,236.4 462.6,234.3 466.6,232.3 470.6,230.4 474.6,228.5 478.6,226.6 482.6,224.7 486.6,222.9 490.6,221.1 494.6,219.4 498.6,217.7 502.6,216.1 506.6,214.5 510.6,212.9 514.6,211.5 518.6,210 522.6,208.7 526.6,207.4 530.6,206.1 534.6,205 538.6,203.9 542.6,202.8 546.6,201.8 550.6,200.9 554.6,200.1 558.6,199.3 562.6,198.6 566.6,198 570.6,197.5 574.6,197 578.6,196.6 582.6,196.3 586.6,196.1 590.6,195.9 594.6,195.8 598.6,195.8 602.6,195.9 606.6,196 610.6,196.2 614.6,196.5 618.6,196.9 622.6,197.4 626.6,197.9 630.6,198.5 634.6,199.2 638.6,199.9 642.6,200.7 646.6,201.6 650.6,202.6 654.6,203.6 658.6,204.7 662.6,205.8 666.6,207.1 670.6,208.4 674.6,209.7 678.6,211.1 682.6,212.6 686.6,214.1 690.6,215.7 694.6,217.3 698.6,219 702.6,220.7 706.6,222.4 710.6,224.2 714.6,226.1 718.6,228 722.6,229.9 726.6,231.9 730.6,233.8 734.6,235.8 738.6,237.9 742.6,239.9 746.6,242 750.6,244.1 754.6,246.2 758.6,248.4 762.6,250.5 766.6,252.6 770.6,254.8 774.6,256.9 778.6,259 782.6,261.2 786.6,263.3 790.6,265.4 794.6,267.5 798.6,269.6 802.6,271.7 806.6,273.7 810.6,275.8 814.6,277.8 818.6,279.7 822.6,281.7 826.6,283.6 830.6,285.4 834.6,287.3 838.6,289 842.6,290.8 846.6,292.5 850.6,294.1 854.6,295.7 858.6,297.3 862.6,298.8 866.6,300.2 870.6,301.6 874.6,302.9 878.6,304.2 882.6,305.3 886.6,306.5 890.6,307.5 894.6,308.5 898.6,309.4 902.6,310.3 906.6,311.1 910.6,311.8 914.6,312.4 918.6,313 922.6,313.5 926.6,313.9 930.6,314.2 934.6,314.5 938.6,314.7 942.6,314.8 946.6,314.8 950.6,314.8 954.6,314.6 958.6,314.4 962.6,314.1 966.6,313.8 970.6,313.4 974.6,312.9 978.6,312.3 982.6,311.6 986.6,310.9 990.6,310.1 994.6,309.2 998.6,308.3 1002.6,307.3 1006.6,306.2 1010.6,305 1014.6,303.8 1018.6,302.6 1022.6,301.2 1026.6,299.9 1030.6,298.4 1034.6,296.9 1038.6,295.3 1042.6,293.7 1046.6,292.1 1050.6,290.4 1054.6,288.6 1058.6,286.8 1062.6,285 1066.6,283.1 1070.6,281.2 1074.6,279.2 1078.6,277.3 1082.6,275.3 1086.6,273.2 1090.6,271.2 1094.6,269.1 1098.6,267 1102.6,264.9 1106.6,262.8 1110.6,260.6 1114.6,258.5 1118.6,256.4 1122.6,254.2 1126.6,252.1 1130.6,250 1134.6,247.8 1138.6,245.7 1142.6,243.6 1146.6,241.5 1150.6,239.4 1154.6,237.4 1158.6,235.3 1162.6,233.3 1166.6,231.4 1170.6,229.4 1174.6,227.5 1178.6,225.6 1182.6,223.8 1186.6,222 1190.6,220.2 1194.6,218.5 1198.6,216.9 1202.6,215.3 1206.6,213.7 1210.6,212.2 1214.6,210.7 1218.6,209.4 1222.6,208 1226.6,206.8 1230.6,205.6 1234.6,204.4 1238.6,203.3 1242.6,202.3 1246.6,201.4 1250.6,200.5 1254.6,199.7 1258.6,199 1262.6,198.3 1266.6,197.7 1270.6,197.2 1274.6,196.8 1278.6,196.5 1282.6,196.2 1286.6,196 1290.6,195.8 1294.6,195.8 1298.6,195.8 1302.6,195.9 1306.6,196.1 1310.6,196.4 1314.6,196.7 1318.6,197.1 1322.6,197.6 1326.6,198.2 1330.6,198.8 1334.6,199.5 1338.6,200.3 1342.6,201.2 1346.6,202.1 1350.6,203.1 1354.6,204.1 1358.6,205.3 1362.6,206.4 1366.6,207.7 1370.6,209 1374.6,210.4 1378.6,211.8 1382.6,213.3 1386.6,214.9 1390.6,216.5 1394.6,218.1 1398.6,219.8 1402.6,221.6 1406.6,223.3 1410.6,225.2 1414.6,227 1418.6,228.9 1422.6,230.9 1426.6,232.8 1430.6,234.8 1434.6,236.9 1438.6,238.9 1442.6,241 1446.6,243.1 1450.6,245.2 1454.6,247.3 1458.6,249.4 1462.6,251.6 1466.6,253.7 1470.6,255.8 1474.6,258 1478.6,260.1 1482.6,262.2 1486.6,264.4 1490.6,266.5 1494.6,268.6 1498.6,270.7 1502.6,272.7 1506.6,274.8 1510.6,276.8 1514.6,278.7 1518.6,280.7 1522.6,282.6 1526.6,284.5 1530.6,286.4 1534.6,288.2 1538.6,289.9 1542.6,291.6 1546.6,293.3 1550.6,294.9 1554.6,296.5 1558.6,298 1562.6,299.5 1566.6,300.9 1570.6,302.2 1574.6,303.5 1578.6,304.8 1582.6,305.9 1586.6,307 1590.6,308 1594.6,309 1598.6,309.9 1602.6,310.7"/>
<rect x="422.6" y="318.8" width="1180.4" height="37" fill="#4f5e30"/>
<rect x="422.6" y="318.8" width="1180.4" height="37" fill="url(#st2)"/>
<rect x="422.6" y="331" width="1180.4" height="1" fill="#f0f0e0" opacity="0.85"/>
<rect x="422.6" y="343" width="1180.4" height="1" fill="#f0f0e0" opacity="0.85"/>
<rect x="422.6" y="359" width="1180.4" height="19.7" fill="#4f5e30"/>
<rect x="422.6" y="359" width="1180.4" height="19.7" fill="url(#st2)"/>
<rect x="422.6" y="364" width="1180.4" height="1" fill="#f0f0e0" opacity="0.85"/>
<rect x="422.6" y="371" width="1180.4" height="1" fill="#f0f0e0" opacity="0.85"/>
<rect x="422.6" y="382" width="1180.4" height="38.3" fill="#a5b08a"/>
<rect x="422.6" y="382" width="1180.4" height="38.3" fill="url(#st2)"/>
<rect x="422.6" y="407" width="1180.4" height="1" fill="#f4f4ea" opacity="0.85"/>
<rect x="422.6" y="420.3" width="1180.4" height="37.4" fill="#4f5e30"/>
<rect x="422.6" y="420.3" width="1180.4" height="37.4" fill="url(#st2)"/>
<rect x="422.6" y="432" width="1180.4" height="1" fill="#f0f0e0" opacity="0.85"/>
<rect x="422.6" y="461" width="1180.4" height="61.6" fill="#b59a8a"/>
<rect x="422.6" y="461" width="1180.4" height="61.6" fill="url(#st2)"/>
<rect x="422.6" y="501" width="1180.4" height="1" fill="#f8f0ec" opacity="0.85"/>
<rect x="422.6" y="522.6" width="1180.4" height="59.3" fill="#5e3e31"/>
<rect x="422.6" y="522.6" width="1180.4" height="59.3" fill="url(#st2)"/>
<rect x="422.6" y="541" width="1180.4" height="1" fill="#f8f0ec" opacity="0.85"/>
<rect x="422.6" y="584.9" width="1180.4" height="20" fill="#2e5e2e"/>
<rect x="422.6" y="584.9" width="1180.4" height="20" fill="url(#st2)"/>
<rect x="422.6" y="591" width="1180.4" height="1" fill="#eef4ee" opacity="0.85"/>
<rect x="422.6" y="597" width="1180.4" height="1" fill="#eef4ee" opacity="0.85"/>
<rect x="422.6" y="608" width="1180.4" height="19.9" fill="#2e5e5e"/>
<rect x="422.6" y="608" width="1180.4" height="19.9" fill="url(#st2)"/>
<rect x="422.6" y="614" width="1180.4" height="1" fill="#eef4f4" opacity="0.85"/>
<rect x="422.6" y="621" width="1180.4" height="1" fill="#eef4f4" opacity="0.85"/>
<rect x="422.6" y="630.9" width="1180.4" height="20" fill="#2e3e5e"/>
<rect x="422.6" y="630.9" width="1180.4" height="20" fill="url(#st)"/>
<rect x="422.6" y="637" width="1180.4" height="1" fill="#eef0f4" opacity="0.85"/>
<rect x="422.6" y="644" width="1180.4" height="1" fill="#eef0f4" opacity="0.85"/>
<rect x="422.6" y="653.9" width="1180.4" height="20" fill="#2e5e2e"/>
<rect x="422.6" y="653.9" width="1180.4" height="20" fill="url(#st2)"/>
<rect x="422.6" y="660" width="1180.4" height="1" fill="#eef4ee" opacity="0.85"/>
<rect x="422.6" y="667" width="1180.4" height="1" fill="#eef4ee" opacity="0.85"/>
<rect x="422.6" y="677" width="1180.4" height="61.9" fill="#b59a8a"/>
<rect x="422.6" y="677" width="1180.4" height="61.9" fill="url(#st2)"/>
<rect x="422.6" y="717" width="1180.4" height="1" fill="#f8f0ec" opacity="0.85"/>
<rect x="422.6" y="739" width="1180.4" height="58.9" fill="#5e3e31"/>
<rect x="422.6" y="739" width="1180.4" height="58.9" fill="url(#st2)"/>
<rect x="422.6" y="757" width="1180.4" height="1" fill="#f8f0ec" opacity="0.85"/>
<polyline fill="none" stroke="#5aa6a6" stroke-width="1.5" points="422.6,810.6 424.6,811.5 426.6,812.8 428.6,814.4 430.6,816.3 432.6,818.4 434.6,820.6 436.6,822.8 438.6,825 440.6,827.1 442.6,829 444.6,830.6 446.6,831.9 448.6,832.9 450.6,833.4 452.6,833.6 454.6,833.2 456.6,832.5 458.6,831.4 460.6,829.8 462.6,827.9 464.6,825.8 466.6,823.4 468.6,820.9 470.6,818.3 472.6,815.7 474.6,813.2 476.6,810.8 478.6,808.7 480.6,806.9 482.6,805.4 484.6,804.3 486.6,803.6 488.6,803.4 490.6,803.6 492.6,804.2 494.6,805.2 496.6,806.6 498.6,808.3 500.6,810.2 502.6,812.4 504.6,814.6 506.6,816.9 508.6,819.1 510.6,821.3 512.6,823.2 514.6,824.8 516.6,826.2 518.6,827.2 520.6,827.7 522.6,827.9 524.6,827.6 526.6,826.9 528.6,825.8 530.6,824.3 532.6,822.4 534.6,820.3 536.6,818 538.6,815.6 540.6,813 542.6,810.5 544.6,808.1 546.6,805.9 548.6,803.9 550.6,802.2 552.6,800.8 554.6,799.8 556.6,799.3 558.6,799.2 560.6,799.5 562.6,800.3 564.6,801.4 566.6,803 568.6,804.8 570.6,806.9 572.6,809.1 574.6,811.5 576.6,813.9 578.6,816.2 580.6,818.4 582.6,820.4 584.6,822.2 586.6,823.6 588.6,824.6 590.6,825.3 592.6,825.5 594.6,825.3 596.6,824.7 598.6,823.6 600.6,822.2 602.6,820.5 604.6,818.4 606.6,816.2 608.6,813.9 610.6,811.5 612.6,809.1 614.6,806.8 616.6,804.7 618.6,802.9 620.6,801.3 622.6,800.1 624.6,799.3 626.6,798.9 628.6,799 630.6,799.5 632.6,800.4 634.6,801.7 636.6,803.4 638.6,805.4 640.6,807.6 642.6,810 644.6,812.5 646.6,815 648.6,817.5 650.6,819.8 652.6,821.9 654.6,823.7 656.6,825.2 658.6,826.3 660.6,827.1 662.6,827.4 664.6,827.2 666.6,826.7 668.6,825.7 670.6,824.4 672.6,822.7 674.6,820.8 676.6,818.7 678.6,816.4 680.6,814.1 682.6,811.9 684.6,809.7 686.6,807.7 688.6,806 690.6,804.6 692.6,803.5 694.6,802.9 696.6,802.7 698.6,802.9 700.6,803.5 702.6,804.6 704.6,806 706.6,807.8 708.6,809.9 710.6,812.3 712.6,814.8 714.6,817.3 716.6,819.9 718.6,822.5 720.6,824.9 722.6,827 724.6,828.9 726.6,830.5 728.6,831.6 730.6,832.4 732.6,832.7 734.6,832.6 736.6,832.1 738.6,831.1 740.6,829.8 742.6,828.2 744.6,826.3 746.6,824.3 748.6,822.1 750.6,819.8 752.6,817.7 754.6,815.6 756.6,813.7 758.6,812 760.6,810.7 762.6,809.7 764.6,809.2 766.6,809 768.6,809.3 770.6,810 772.6,811.2 774.6,812.7 776.6,814.6 778.6,816.7 780.6,819.1 782.6,821.7 784.6,824.3 786.6,826.9 788.6,829.4 790.6,831.8 792.6,834 794.6,835.8 796.6,837.4 798.6,838.5 800.6,839.2 802.6,839.5 804.6,839.4 806.6,838.8 808.6,837.8 810.6,836.5 812.6,834.8 814.6,832.9 816.6,830.8 818.6,828.6 820.6,826.4 822.6,824.2 824.6,822.1 826.6,820.2 828.6,818.5 830.6,817.2 832.6,816.3 834.6,815.7 836.6,815.6 838.6,815.9 840.6,816.6 842.6,817.8 844.6,819.3 846.6,821.2 848.6,823.3 850.6,825.6 852.6,828.1 854.6,830.7 856.6,833.3 858.6,835.7 860.6,838 862.6,840.1 864.6,841.9 866.6,843.3 868.6,844.4 870.6,845 872.6,845.1 874.6,844.9 876.6,844.2 878.6,843.1 880.6,841.7 882.6,839.9 884.6,837.9 886.6,835.7 888.6,833.4 890.6,831.1 892.6,828.8 894.6,826.6 896.6,824.7 898.6,823 900.6,821.6 902.6,820.6 904.6,820 906.6,819.8 908.6,820.1 910.6,820.7 912.6,821.8 914.6,823.3 916.6,825.1 918.6,827.1 920.6,829.4 922.6,831.8 924.6,834.3 926.6,836.7 928.6,839.1 930.6,841.2 932.6,843.2 934.6,844.8 936.6,846.1 938.6,847 940.6,847.4 942.6,847.4 944.6,847 946.6,846.2 948.6,844.9 950.6,843.3 952.6,841.4 954.6,839.3 956.6,837 958.6,834.5 960.6,832.1 962.6,829.7 964.6,827.4 966.6,825.4 968.6,823.6 970.6,822.1 972.6,821 974.6,820.3 976.6,820.1 978.6,820.3 980.6,820.9 982.6,821.9 984.6,823.2 986.6,824.9 988.6,826.9 990.6,829.1 992.6,831.3 994.6,833.7 996.6,836 998.6,838.2 1000.6,840.3 1002.6,842 1004.6,843.5 1006.6,844.6 1008.6,845.4 1010.6,845.7 1012.6,845.5 1014.6,844.9 1016.6,843.9 1018.6,842.5 1020.6,840.8 1022.6,838.8 1024.6,836.5 1026.6,834 1028.6,831.5 1030.6,828.9 1032.6,826.4 1034.6,824.1 1036.6,821.9 1038.6,820.1 1040.6,818.5 1042.6,817.4 1044.6,816.6 1046.6,816.3 1048.6,816.4 1050.6,817 1052.6,817.9 1054.6,819.2 1056.6,820.8 1058.6,822.7 1060.6,824.8 1062.6,827 1064.6,829.3 1066.6,831.5 1068.6,833.6 1070.6,835.5 1072.6,837.2 1074.6,838.6 1076.6,839.6 1078.6,840.2 1080.6,840.4 1082.6,840.1 1084.6,839.4 1086.6,838.3 1088.6,836.8 1090.6,834.9 1092.6,832.8 1094.6,830.4 1096.6,827.9 1098.6,825.3 1100.6,822.7 1102.6,820.1 1104.6,817.7 1106.6,815.6 1108.6,813.7 1110.6,812.1 1112.6,811 1114.6,810.2 1116.6,809.9 1118.6,810 1120.6,810.6 1122.6,811.5 1124.6,812.8 1126.6,814.4 1128.6,816.3 1130.6,818.4 1132.6,820.6 1134.6,822.8 1136.6,825 1138.6,827.1 1140.6,829 1142.6,830.6 1144.6,831.9 1146.6,832.9 1148.6,833.4 1150.6,833.6 1152.6,833.2 1154.6,832.5 1156.6,831.4 1158.6,829.8 1160.6,827.9 1162.6,825.8 1164.6,823.4 1166.6,820.9 1168.6,818.3 1170.6,815.7 1172.6,813.2 1174.6,810.8 1176.6,808.7 1178.6,806.9 1180.6,805.4 1182.6,804.3 1184.6,803.6 1186.6,803.4 1188.6,803.6 1190.6,804.2 1192.6,805.2 1194.6,806.6 1196.6,808.3 1198.6,810.2 1200.6,812.4 1202.6,814.6 1204.6,816.9 1206.6,819.1 1208.6,821.3 1210.6,823.2 1212.6,824.8 1214.6,826.2 1216.6,827.2 1218.6,827.7 1220.6,827.9 1222.6,827.6 1224.6,826.9 1226.6,825.8 1228.6,824.3 1230.6,822.4 1232.6,820.3 1234.6,818 1236.6,815.6 1238.6,813 1240.6,810.5 1242.6,808.1 1244.6,805.9 1246.6,803.9 1248.6,802.2 1250.6,800.8 1252.6,799.8 1254.6,799.3 1256.6,799.2 1258.6,799.5 1260.6,800.3 1262.6,801.4 1264.6,803 1266.6,804.8 1268.6,806.9 1270.6,809.1 1272.6,811.5 1274.6,813.9 1276.6,816.2 1278.6,818.4 1280.6,820.4 1282.6,822.2 1284.6,823.6 1286.6,824.6 1288.6,825.3 1290.6,825.5 1292.6,825.3 1294.6,824.7 1296.6,823.6 1298.6,822.2 1300.6,820.5 1302.6,818.4 1304.6,816.2 1306.6,813.9 1308.6,811.5 1310.6,809.1 1312.6,806.8 1314.6,804.7 1316.6,802.9 1318.6,801.3 1320.6,800.1 1322.6,799.3 1324.6,798.9 1326.6,799 1328.6,799.5 1330.6,800.4 1332.6,801.7 1334.6,803.4 1336.6,805.4 1338.6,807.6 1340.6,810 1342.6,812.5 1344.6,815 1346.6,817.5 1348.6,819.8 1350.6,821.9 1352.6,823.7 1354.6,825.2 1356.6,826.3 1358.6,827.1 1360.6,827.4 1362.6,827.2 1364.6,826.7 1366.6,825.7 1368.6,824.4 1370.6,822.7 1372.6,820.8 1374.6,818.7 1376.6,816.4 1378.6,814.1 1380.6,811.9 1382.6,809.7 1384.6,807.7 1386.6,806 1388.6,804.6 1390.6,803.5 1392.6,802.9 1394.6,802.7 1396.6,802.9 1398.6,803.5 1400.6,804.6 1402.6,806 1404.6,807.8 1406.6,809.9 1408.6,812.3 1410.6,814.8 1412.6,817.3 1414.6,819.9 1416.6,822.5 1418.6,824.9 1420.6,827 1422.6,828.9 1424.6,830.5 1426.6,831.6 1428.6,832.4 1430.6,832.7 1432.6,832.6 1434.6,832.1 1436.6,831.1 1438.6,829.8 1440.6,828.2 1442.6,826.3 1444.6,824.3 1446.6,822.1 1448.6,819.8 1450.6,817.7 1452.6,815.6 1454.6,813.7 1456.6,812 1458.6,810.7 1460.6,809.7 1462.6,809.2 1464.6,809 1466.6,809.3 1468.6,810 1470.6,811.2 1472.6,812.7 1474.6,814.6 1476.6,816.7 1478.6,819.1 1480.6,821.7 1482.6,824.3 1484.6,826.9 1486.6,829.4 1488.6,831.8 1490.6,834 1492.6,835.8 1494.6,837.4 1496.6,838.5 1498.6,839.2 1500.6,839.5 1502.6,839.4 1504.6,838.8 1506.6,837.8 1508.6,836.5 1510.6,834.8 1512.6,832.9 1514.6,830.8 1516.6,828.6 1518.6,826.4 1520.6,824.2 1522.6,822.1 1524.6,820.2 1526.6,818.5 1528.6,817.2 1530.6,816.3 1532.6,815.7 1534.6,815.6 1536.6,815.9 1538.6,816.6 1540.6,817.8 1542.6,819.3 1544.6,821.2 1546.6,823.3 1548.6,825.6 1550.6,828.1 1552.6,830.7 1554.6,833.3 1556.6,835.7 1558.6,838 1560.6,840.1 1562.6,841.9 1564.6,843.3 1566.6,844.4 1568.6,845 1570.6,845.1 1572.6,844.9 1574.6,844.2 1576.6,843.1 1578.6,841.7 1580.6,839.9 1582.6,837.9 1584.6,835.7 1586.6,833.4 1588.6,831.1 1590.6,828.8 1592.6,826.6 1594.6,824.7 1596.6,823 1598.6,821.6 1600.6,820.6 1602.6,820"/>
<polyline fill="none" stroke="#a8785a" stroke-width="1.5" points="422.6,898.7 424.6,898.1 426.6,897.6 428.6,897 430.6,896.5 432.6,896.1 434.6,895.7 436.6,895.5 438.6,895.3 440.6,895.2 442.6,895.2 444.6,895.3 446.6,895.5 448.6,895.8 450.6,896.1 452.6,896.5 454.6,896.9 456.6,897.4 458.6,897.8 460.6,898.3 462.6,898.6 464.6,899 466.6,899.3 468.6,899.5 470.6,899.6 472.6,899.5 474.6,899.4 476.6,899.2 478.6,898.9 480.6,898.4 482.6,897.9 484.6,897.3 486.6,896.6 488.6,895.9 490.6,895.1 492.6,894.2 494.6,893.4 496.6,892.6 498.6,891.9 500.6,891.1 502.6,890.5 504.6,889.9 506.6,889.4 508.6,889 510.6,888.7 512.6,888.5 514.6,888.4 516.6,888.4 518.6,888.4 520.6,888.5 522.6,888.7 524.6,888.9 526.6,889.2 528.6,889.4 530.6,889.6 532.6,889.8 534.6,890 536.6,890.1 538.6,890 540.6,889.9 542.6,889.7 544.6,889.4 546.6,889 548.6,888.5 550.6,887.9 552.6,887.2 554.6,886.4 556.6,885.5 558.6,884.6 560.6,883.7 562.6,882.7 564.6,881.7 566.6,880.8 568.6,879.9 570.6,879 572.6,878.3 574.6,877.6 576.6,877 578.6,876.4 580.6,876 582.6,875.7 584.6,875.5 586.6,875.4 588.6,875.4 590.6,875.4 592.6,875.5 594.6,875.6 596.6,875.8 598.6,876 600.6,876.1 602.6,876.2 604.6,876.3 606.6,876.3 608.6,876.2 610.6,876.1 612.6,875.8 614.6,875.5 616.6,875 618.6,874.5 620.6,873.8 622.6,873.1 624.6,872.2 626.6,871.4 628.6,870.4 630.6,869.5 632.6,868.5 634.6,867.6 636.6,866.6 638.6,865.7 640.6,864.9 642.6,864.2 644.6,863.5 646.6,862.9 648.6,862.5 650.6,862.1 652.6,861.9 654.6,861.7 656.6,861.7 658.6,861.7 660.6,861.8 662.6,862 664.6,862.2 666.6,862.4 668.6,862.7 670.6,862.9 672.6,863.1 674.6,863.3 676.6,863.4 678.6,863.4 680.6,863.4 682.6,863.2 684.6,862.9 686.6,862.6 688.6,862.2 690.6,861.6 692.6,861 694.6,860.3 696.6,859.6 698.6,858.8 700.6,858 702.6,857.2 704.6,856.4 706.6,855.6 708.6,854.9 710.6,854.2 712.6,853.7 714.6,853.2 716.6,852.8 718.6,852.5 720.6,852.4 722.6,852.3 724.6,852.4 726.6,852.5 728.6,852.7 730.6,853.1 732.6,853.4 734.6,853.9 736.6,854.3 738.6,854.8 740.6,855.2 742.6,855.6 744.6,856 746.6,856.3 748.6,856.5 750.6,856.7 752.6,856.8 754.6,856.7 756.6,856.6 758.6,856.4 760.6,856.1 762.6,855.7 764.6,855.2 766.6,854.7 768.6,854.2 770.6,853.6 772.6,853 774.6,852.5 776.6,851.9 778.6,851.5 780.6,851.1 782.6,850.8 784.6,850.5 786.6,850.4 788.6,850.4 790.6,850.5 792.6,850.7 794.6,851 796.6,851.5 798.6,852 800.6,852.5 802.6,853.2 804.6,853.9 806.6,854.6 808.6,855.3 810.6,856 812.6,856.6 814.6,857.2 816.6,857.8 818.6,858.3 820.6,858.7 822.6,859 824.6,859.2 826.6,859.3 828.6,859.3 830.6,859.3 832.6,859.1 834.6,858.9 836.6,858.6 838.6,858.3 840.6,858 842.6,857.7 844.6,857.3 846.6,857.1 848.6,856.8 850.6,856.7 852.6,856.6 854.6,856.6 856.6,856.8 858.6,857 860.6,857.3 862.6,857.8 864.6,858.3 866.6,859 868.6,859.7 870.6,860.5 872.6,861.3 874.6,862.2 876.6,863.1 878.6,864 880.6,864.9 882.6,865.8 884.6,866.6 886.6,867.3 888.6,868 890.6,868.6 892.6,869 894.6,869.4 896.6,869.7 898.6,869.9 900.6,870 902.6,870 904.6,869.9 906.6,869.8 908.6,869.6 910.6,869.5 912.6,869.3 914.6,869.1 916.6,869 918.6,868.9 920.6,868.9 922.6,868.9 924.6,869.1 926.6,869.3 928.6,869.7 930.6,870.1 932.6,870.7 934.6,871.4 936.6,872.1 938.6,872.9 940.6,873.8 942.6,874.8 944.6,875.7 946.6,876.7 948.6,877.7 950.6,878.6 952.6,879.6 954.6,880.4 956.6,881.2 958.6,881.9 960.6,882.5 962.6,883 964.6,883.4 966.6,883.7 968.6,883.9 970.6,884 972.6,884 974.6,884 976.6,883.9 978.6,883.7 980.6,883.5 982.6,883.3 984.6,883.2 986.6,883 988.6,882.9 990.6,882.9 992.6,882.9 994.6,883 996.6,883.3 998.6,883.6 1000.6,884 1002.6,884.5 1004.6,885.1 1006.6,885.8 1008.6,886.6 1010.6,887.4 1012.6,888.3 1014.6,889.2 1016.6,890.1 1018.6,891 1020.6,891.8 1022.6,892.6 1024.6,893.4 1026.6,894.1 1028.6,894.7 1030.6,895.1 1032.6,895.5 1034.6,895.8 1036.6,895.9 1038.6,896 1040.6,896 1042.6,895.8 1044.6,895.6 1046.6,895.4 1048.6,895.1 1050.6,894.7 1052.6,894.4 1054.6,894 1056.6,893.7 1058.6,893.5 1060.6,893.3 1062.6,893.2 1064.6,893.1 1066.6,893.2 1068.6,893.3 1070.6,893.6 1072.6,893.9 1074.6,894.3 1076.6,894.8 1078.6,895.4 1080.6,896 1082.6,896.7 1084.6,897.4 1086.6,898.1 1088.6,898.8 1090.6,899.4 1092.6,900 1094.6,900.5 1096.6,901 1098.6,901.3 1100.6,901.5 1102.6,901.7 1104.6,901.7 1106.6,901.6 1108.6,901.4 1110.6,901.2 1112.6,900.8 1114.6,900.3 1116.6,899.8 1118.6,899.3 1120.6,898.7 1122.6,898.1 1124.6,897.5 1126.6,897 1128.6,896.5 1130.6,896 1132.6,895.7 1134.6,895.4 1136.6,895.2 1138.6,895.1 1140.6,895.1 1142.6,895.2 1144.6,895.4 1146.6,895.6 1148.6,896 1150.6,896.3 1152.6,896.7 1154.6,897.2 1156.6,897.6 1158.6,898 1160.6,898.4 1162.6,898.8 1164.6,899 1166.6,899.2 1168.6,899.3 1170.6,899.3 1172.6,899.1 1174.6,898.9 1176.6,898.6 1178.6,898.1 1180.6,897.6 1182.6,897 1184.6,896.3 1186.6,895.5 1188.6,894.7 1190.6,893.9 1192.6,893 1194.6,892.2 1196.6,891.5 1198.6,890.7 1200.6,890.1 1202.6,889.5 1204.6,889 1206.6,888.6 1208.6,888.2 1210.6,888 1212.6,887.9 1214.6,887.9 1216.6,887.9 1218.6,888.1 1220.6,888.2 1222.6,888.4 1224.6,888.7 1226.6,888.9 1228.6,889.1 1230.6,889.3 1232.6,889.5 1234.6,889.5 1236.6,889.5 1238.6,889.4 1240.6,889.2 1242.6,888.9 1244.6,888.5 1246.6,887.9 1248.6,887.3 1250.6,886.6 1252.6,885.8 1254.6,884.9 1256.6,884 1258.6,883.1 1260.6,882.1 1262.6,881.1 1264.6,880.2 1266.6,879.3 1268.6,878.4 1270.6,877.7 1272.6,877 1274.6,876.3 1276.6,875.8 1278.6,875.4 1280.6,875.1 1282.6,874.9 1284.6,874.8 1286.6,874.8 1288.6,874.8 1290.6,874.9 1292.6,875 1294.6,875.2 1296.6,875.4 1298.6,875.5 1300.6,875.6 1302.6,875.7 1304.6,875.7 1306.6,875.6 1308.6,875.5 1310.6,875.2 1312.6,874.9 1314.6,874.4 1316.6,873.9 1318.6,873.2 1320.6,872.5 1322.6,871.6 1324.6,870.8 1326.6,869.9 1328.6,868.9 1330.6,867.9 1332.6,867 1334.6,866.1 1336.6,865.2 1338.6,864.4 1340.6,863.6 1342.6,863 1344.6,862.4 1346.6,861.9 1348.6,861.6 1350.6,861.3 1352.6,861.2 1354.6,861.2 1356.6,861.2 1358.6,861.3 1360.6,861.5 1362.6,861.7 1364.6,862 1366.6,862.2 1368.6,862.5 1370.6,862.7 1372.6,862.8 1374.6,862.9 1376.6,863 1378.6,862.9 1380.6,862.8 1382.6,862.5 1384.6,862.2 1386.6,861.7 1388.6,861.2 1390.6,860.6 1392.6,859.9 1394.6,859.2 1396.6,858.4 1398.6,857.6 1400.6,856.8 1402.6,856 1404.6,855.3 1406.6,854.6 1408.6,853.9 1410.6,853.4 1412.6,852.9 1414.6,852.5 1416.6,852.3 1418.6,852.1 1420.6,852.1 1422.6,852.1 1424.6,852.3 1426.6,852.5 1428.6,852.9 1430.6,853.2 1432.6,853.7 1434.6,854.1 1436.6,854.6 1438.6,855 1440.6,855.5 1442.6,855.9 1444.6,856.2 1446.6,856.4 1448.6,856.6 1450.6,856.7 1452.6,856.6 1454.6,856.5 1456.6,856.3 1458.6,856 1460.6,855.6 1462.6,855.2 1464.6,854.7 1466.6,854.2 1468.6,853.6 1470.6,853 1472.6,852.5 1474.6,852 1476.6,851.5 1478.6,851.2 1480.6,850.8 1482.6,850.6 1484.6,850.5 1486.6,850.5 1488.6,850.6 1490.6,850.9 1492.6,851.2 1494.6,851.6 1496.6,852.1 1498.6,852.7 1500.6,853.4 1502.6,854 1504.6,854.8 1506.6,855.5 1508.6,856.2 1510.6,856.9 1512.6,857.5 1514.6,858.1 1516.6,858.6 1518.6,859 1520.6,859.3 1522.6,859.5 1524.6,859.6 1526.6,859.6 1528.6,859.6 1530.6,859.4 1532.6,859.2 1534.6,859 1536.6,858.7 1538.6,858.4 1540.6,858 1542.6,857.7 1544.6,857.5 1546.6,857.3 1548.6,857.1 1550.6,857 1552.6,857.1 1554.6,857.2 1556.6,857.4 1558.6,857.8 1560.6,858.2 1562.6,858.8 1564.6,859.4 1566.6,860.2 1568.6,861 1570.6,861.8 1572.6,862.7 1574.6,863.6 1576.6,864.5 1578.6,865.4 1580.6,866.3 1582.6,867.1 1584.6,867.9 1586.6,868.5 1588.6,869.1 1590.6,869.6 1592.6,870 1594.6,870.3 1596.6,870.4 1598.6,870.5 1600.6,870.5 1602.6,870.5"/>
<rect x="397" y="908.8" width="1206" height="1" fill="#dedede"/>
<rect x="397" y="925.0" width="1206" height="1" fill="#dedede"/>
<rect x="397" y="941.8" width="1206" height="1" fill="#dedede"/>
<rect x="397" y="958.0" width="1206" height="1" fill="#dedede"/>
<polyline fill="none" stroke="#8a5aa8" stroke-width="1.5" points="422.6,973 424.6,972.2 426.6,971.5 428.6,970.8 430.6,970.1 432.6,969.6 434.6,969.1 436.6,968.7 438.6,968.5 440.6,968.4 442.6,968.4 444.6,968.5 446.6,968.7 448.6,969.1 450.6,969.5 452.6,970 454.6,970.5 456.6,971.1 458.6,971.7 460.6,972.2 462.6,972.7 464.6,973.1 466.6,973.5 468.6,973.7 470.6,973.8 472.6,973.8 474.6,973.6 476.6,973.3 478.6,972.8 480.6,972.2 482.6,971.4 484.6,970.6 486.6,969.7 488.6,968.6 490.6,967.6 492.6,966.5 494.6,965.3 496.6,964.3 498.6,963.2 500.6,962.2 502.6,961.3 504.6,960.5 506.6,959.8 508.6,959.2 510.6,958.8 512.6,958.5 514.6,958.3 516.6,958.2 518.6,958.2 520.6,958.3 522.6,958.5 524.6,958.8 526.6,959 528.6,959.3 530.6,959.5 532.6,959.7 534.6,959.9 536.6,959.9 538.6,959.8 540.6,959.6 542.6,959.3 544.6,958.9 546.6,958.3 548.6,957.5 550.6,956.7 552.6,955.7 554.6,954.6 556.6,953.4 558.6,952.1 560.6,950.8 562.6,949.5 564.6,948.2 566.6,946.9 568.6,945.6 570.6,944.4 572.6,943.3 574.6,942.4 576.6,941.5 578.6,940.8 580.6,940.2 582.6,939.7 584.6,939.4 586.6,939.1 588.6,939 590.6,939 592.6,939.1 594.6,939.2 596.6,939.3 598.6,939.5 600.6,939.6 602.6,939.7 604.6,939.7 606.6,939.7 608.6,939.5 610.6,939.2 612.6,938.8 614.6,938.3 616.6,937.6 618.6,936.9 620.6,935.9 622.6,934.9 624.6,933.8 626.6,932.5 628.6,931.3 630.6,930 632.6,928.6 634.6,927.3 636.6,926 638.6,924.8 640.6,923.7 642.6,922.6 644.6,921.7 646.6,920.9 648.6,920.2 650.6,919.7 652.6,919.3 654.6,919.1 656.6,918.9 658.6,918.9 660.6,919 662.6,919.2 664.6,919.4 666.6,919.7 668.6,919.9 670.6,920.2 672.6,920.4 674.6,920.6 676.6,920.7 678.6,920.6 680.6,920.5 682.6,920.3 684.6,919.9 686.6,919.4 688.6,918.8 690.6,918 692.6,917.2 694.6,916.2 696.6,915.2 698.6,914.1 700.6,913 702.6,911.9 704.6,910.8 706.6,909.8 708.6,908.8 710.6,907.9 712.6,907.1 714.6,906.5 716.6,906 718.6,905.6 720.6,905.3 722.6,905.2 724.6,905.3 726.6,905.4 728.6,905.7 730.6,906.1 732.6,906.6 734.6,907.1 736.6,907.7 738.6,908.3 740.6,908.8 742.6,909.4 744.6,909.8 746.6,910.2 748.6,910.5 750.6,910.7 752.6,910.8 754.6,910.7 756.6,910.5 758.6,910.2 760.6,909.8 762.6,909.3 764.6,908.7 766.6,908 768.6,907.3 770.6,906.6 772.6,905.8 774.6,905.1 776.6,904.4 778.6,903.8 780.6,903.3 782.6,902.9 784.6,902.6 786.6,902.5 788.6,902.5 790.6,902.6 792.6,902.9 794.6,903.3 796.6,903.9 798.6,904.6 800.6,905.3 802.6,906.2 804.6,907.1 806.6,908 808.6,909 810.6,909.9 812.6,910.8 814.6,911.7 816.6,912.4 818.6,913.1 820.6,913.6 822.6,914.1 824.6,914.4 826.6,914.5 828.6,914.6 830.6,914.5 832.6,914.4 834.6,914.1 836.6,913.8 838.6,913.4 840.6,913.1 842.6,912.7 844.6,912.3 846.6,912 848.6,911.7 850.6,911.6 852.6,911.5 854.6,911.6 856.6,911.8 858.6,912.1 860.6,912.6 862.6,913.3 864.6,914 866.6,914.9 868.6,915.9 870.6,917 872.6,918.2 874.6,919.4 876.6,920.6 878.6,921.9 880.6,923.1 882.6,924.3 884.6,925.4 886.6,926.4 888.6,927.4 890.6,928.2 892.6,928.9 894.6,929.4 896.6,929.8 898.6,930.1 900.6,930.3 902.6,930.4 904.6,930.3 906.6,930.3 908.6,930.1 910.6,929.9 912.6,929.8 914.6,929.6 916.6,929.5 918.6,929.4 920.6,929.5 922.6,929.6 924.6,929.9 926.6,930.3 928.6,930.8 930.6,931.5 932.6,932.3 934.6,933.2 936.6,934.2 938.6,935.4 940.6,936.6 942.6,937.9 944.6,939.3 946.6,940.6 948.6,942 950.6,943.3 952.6,944.6 954.6,945.7 956.6,946.8 958.6,947.8 960.6,948.7 962.6,949.4 964.6,950 966.6,950.5 968.6,950.8 970.6,951 972.6,951.1 974.6,951.1 976.6,951 978.6,950.8 980.6,950.6 982.6,950.5 984.6,950.3 986.6,950.2 988.6,950.1 990.6,950.1 992.6,950.2 994.6,950.4 996.6,950.8 998.6,951.3 1000.6,951.9 1002.6,952.6 1004.6,953.5 1006.6,954.4 1008.6,955.5 1010.6,956.6 1012.6,957.8 1014.6,959 1016.6,960.3 1018.6,961.5 1020.6,962.7 1022.6,963.8 1024.6,964.8 1026.6,965.8 1028.6,966.6 1030.6,967.3 1032.6,967.8 1034.6,968.2 1036.6,968.5 1038.6,968.6 1040.6,968.6 1042.6,968.4 1044.6,968.2 1046.6,967.9 1048.6,967.5 1050.6,967.1 1052.6,966.7 1054.6,966.3 1056.6,966 1058.6,965.6 1060.6,965.4 1062.6,965.3 1064.6,965.3 1066.6,965.4 1068.6,965.6 1070.6,965.9 1072.6,966.4 1074.6,967 1076.6,967.7 1078.6,968.4 1080.6,969.3 1082.6,970.2 1084.6,971.1 1086.6,972 1088.6,972.9 1090.6,973.8 1092.6,974.6 1094.6,975.3 1096.6,975.9 1098.6,976.4 1100.6,976.7 1102.6,976.9 1104.6,976.9 1106.6,976.8 1108.6,976.6 1110.6,976.2 1112.6,975.7 1114.6,975.1 1116.6,974.5 1118.6,973.8 1120.6,973 1122.6,972.2 1124.6,971.5 1126.6,970.7 1128.6,970.1 1130.6,969.5 1132.6,969 1134.6,968.6 1136.6,968.3 1138.6,968.2 1140.6,968.2 1142.6,968.3 1144.6,968.5 1146.6,968.8 1148.6,969.3 1150.6,969.7 1152.6,970.3 1154.6,970.8 1156.6,971.4 1158.6,971.9 1160.6,972.4 1162.6,972.8 1164.6,973.1 1166.6,973.3 1168.6,973.4 1170.6,973.3 1172.6,973.2 1174.6,972.8 1176.6,972.3 1178.6,971.7 1180.6,971 1182.6,970.1 1184.6,969.2 1186.6,968.1 1188.6,967 1190.6,965.9 1192.6,964.8 1194.6,963.7 1196.6,962.6 1198.6,961.6 1200.6,960.7 1202.6,959.9 1204.6,959.2 1206.6,958.6 1208.6,958.1 1210.6,957.8 1212.6,957.6 1214.6,957.5 1216.6,957.5 1218.6,957.6 1220.6,957.8 1222.6,958 1224.6,958.3 1226.6,958.5 1228.6,958.8 1230.6,959 1232.6,959.1 1234.6,959.1 1236.6,959 1238.6,958.8 1240.6,958.5 1242.6,958 1244.6,957.4 1246.6,956.7 1248.6,955.8 1250.6,954.8 1252.6,953.7 1254.6,952.5 1256.6,951.3 1258.6,949.9 1260.6,948.6 1262.6,947.3 1264.6,946 1266.6,944.7 1268.6,943.5 1270.6,942.4 1272.6,941.5 1274.6,940.6 1276.6,939.9 1278.6,939.3 1280.6,938.8 1282.6,938.4 1284.6,938.2 1286.6,938.1 1288.6,938.1 1290.6,938.2 1292.6,938.3 1294.6,938.4 1296.6,938.6 1298.6,938.7 1300.6,938.8 1302.6,938.8 1304.6,938.8 1306.6,938.6 1308.6,938.3 1310.6,938 1312.6,937.4 1314.6,936.8 1316.6,936 1318.6,935 1320.6,934 1322.6,932.9 1324.6,931.7 1326.6,930.4 1328.6,929.1 1330.6,927.8 1332.6,926.5 1334.6,925.2 1336.6,924 1338.6,922.8 1340.6,921.8 1342.6,920.9 1344.6,920.1 1346.6,919.4 1348.6,918.9 1350.6,918.5 1352.6,918.3 1354.6,918.2 1356.6,918.2 1358.6,918.3 1360.6,918.4 1362.6,918.7 1364.6,918.9 1366.6,919.2 1368.6,919.5 1370.6,919.7 1372.6,919.9 1374.6,920 1376.6,920 1378.6,919.9 1380.6,919.6 1382.6,919.3 1384.6,918.8 1386.6,918.2 1388.6,917.4 1390.6,916.6 1392.6,915.7 1394.6,914.7 1396.6,913.6 1398.6,912.5 1400.6,911.4 1402.6,910.3 1404.6,909.3 1406.6,908.3 1408.6,907.5 1410.6,906.7 1412.6,906.1 1414.6,905.5 1416.6,905.2 1418.6,904.9 1420.6,904.9 1422.6,904.9 1424.6,905.1 1426.6,905.4 1428.6,905.8 1430.6,906.3 1432.6,906.8 1434.6,907.4 1436.6,908 1438.6,908.6 1440.6,909.1 1442.6,909.6 1444.6,910 1446.6,910.4 1448.6,910.6 1450.6,910.6 1452.6,910.6 1454.6,910.4 1456.6,910.2 1458.6,909.8 1460.6,909.3 1462.6,908.7 1464.6,908 1466.6,907.3 1468.6,906.6 1470.6,905.9 1472.6,905.2 1474.6,904.5 1476.6,903.9 1478.6,903.4 1480.6,903 1482.6,902.7 1484.6,902.6 1486.6,902.6 1488.6,902.8 1490.6,903.1 1492.6,903.5 1494.6,904.1 1496.6,904.8 1498.6,905.6 1500.6,906.5 1502.6,907.4 1504.6,908.3 1506.6,909.3 1508.6,910.3 1510.6,911.2 1512.6,912 1514.6,912.8 1516.6,913.5 1518.6,914 1520.6,914.5 1522.6,914.8 1524.6,915 1526.6,915.1 1528.6,915 1530.6,914.9 1532.6,914.6 1534.6,914.3 1536.6,914 1538.6,913.6 1540.6,913.2 1542.6,912.9 1544.6,912.6 1546.6,912.3 1548.6,912.2 1550.6,912.1 1552.6,912.2 1554.6,912.4 1556.6,912.8 1558.6,913.3 1560.6,913.9 1562.6,914.7 1564.6,915.6 1566.6,916.6 1568.6,917.7 1570.6,918.9 1572.6,920.1 1574.6,921.4 1576.6,922.6 1578.6,923.9 1580.6,925.1 1582.6,926.2 1584.6,927.2 1586.6,928.2 1588.6,929 1590.6,929.7 1592.6,930.2 1594.6,930.7 1596.6,931 1598.6,931.1 1600.6,931.2 1602.6,931.2"/>
<rect x="399.2" y="908" width="1.6" height="68" fill="#b898d0"/>
<rect x="397" y="907.5" width="6" height="1.2" fill="#7a4a9a"/>
<text x="407" y="922" font-family="Liberation Sans" font-size="18" fill="#c4c4c4">1E+3</text>
<text x="407" y="973" font-family="Liberation Sans" font-size="18" fill="#c4c4c4">0</text>
<rect x="397" y="973" width="1206" height="1.6" fill="#3434b4"/>
<rect x="419.8" y="67" width="1" height="1285" fill="#c8c8c8"/>
<rect x="421.8" y="67" width="1.6" height="1285" fill="#2a2ad4"/>
<rect x="422" y="34" width="1.2" height="33" fill="#555"/>
</svg>
<div style="position:absolute;left:0px;top:1352px;width:2394.0px;height:1.0px;background:#d2d2d2;"></div>
<div style="position:absolute;left:0px;top:1353px;width:2394.0px;height:3.0px;background:#f0f0f0;"></div>
<div style="position:absolute;left:1597px;top:2px;width:3.0px;height:1350.0px;background:rgba(200,200,200,0.75);"></div>
<div style="position:absolute;left:1600px;top:2px;width:3.0px;height:1350.0px;background:rgba(235,235,235,0.25);"></div>
<div style="position:absolute;left:1603px;top:2px;width:749.6px;height:57.5px;background:#d4d4d4;"></div>
<div style="position:absolute;left:1603px;top:59.5px;width:749.6px;height:1251.5px;background:#f5f5f5;"></div>
<svg style="position:absolute;left:1605px;top:20px" width="18" height="16" viewBox="0 0 18 16" ><path d="M1 0V15H17" fill="none" stroke="#6b5b4b" stroke-width="1.5"/><path d="M3 11L7 6L10 8.5L15 3.5" fill="none" stroke="#3a3a3a" stroke-width="1.5"/></svg>
<div style="position:absolute;left:1626.0px;top:18.3px;font-size:19.13px;line-height:19.13px;color:#111;font-weight:bold;white-space:nowrap;">View Signal</div>
<svg style="position:absolute;left:2300.3px;top:16.9px" width="22" height="22" viewBox="0 0 22 22" ><circle cx="11" cy="11" r="9.8" fill="none" stroke="#063b80" stroke-width="1.8"/><text x="11" y="16.5" text-anchor="middle" font-family="Liberation Sans" font-weight="bold" font-size="15" fill="#063b80">?</text></svg>
<svg style="position:absolute;left:2331px;top:21.5px" width="18" height="17" viewBox="0 0 18 17" ><path d="M1.5 1.5L16.5 15.5M16.5 1.5L1.5 15.5" stroke="#111" stroke-width="2.2"/></svg>
<div style="position:absolute;left:1611.0px;top:77.0px;font-size:18.81px;line-height:18.81px;color:#1a1a1a;font-weight:normal;white-space:nowrap;">Name:</div>
<div style="position:absolute;left:1719px;top:63.5px;width:522.6px;height:41.8px;background:#fff;box-sizing:border-box;border:1px solid #d9d9d9;"></div>
<div style="position:absolute;left:1726.2px;top:75.6px;font-size:20.42px;line-height:20.42px;color:#111;font-weight:normal;white-space:nowrap;">More Statements</div>
<div style="position:absolute;left:2248px;top:75px;width:18.0px;height:18.0px;background:#0b4fc4;border-radius:3px;"></div>
<svg style="position:absolute;left:2248px;top:75px" width="18" height="18" viewBox="0 0 18 18" ><path d="M3.5 9.5L7.5 13.5L14.5 4.5" fill="none" stroke="#fff" stroke-width="2.4"/></svg>
<div style="position:absolute;left:2275.2px;top:77.3px;font-size:18.59px;line-height:18.59px;color:#1a1a1a;font-weight:normal;white-space:nowrap;">Enable</div>
<div style="position:absolute;left:1611.0px;top:121.3px;font-size:19.77px;line-height:19.77px;color:#1a1a1a;font-weight:normal;white-space:nowrap;">Description:</div>
<div style="position:absolute;left:1719px;top:109.4px;width:614.3px;height:41.0px;background:#fff;box-sizing:border-box;border:1px solid #d9d9d9;"></div>
<div style="position:absolute;left:1611.0px;top:171.0px;font-size:18.66px;line-height:18.66px;color:#1a1a1a;font-weight:normal;white-space:nowrap;">Icon:</div>
<div style="position:absolute;left:1719px;top:154.5px;width:614.3px;height:49.7px;background:#fff;box-sizing:border-box;border:1px solid #d9d9d9;"></div>
<div style="position:absolute;left:1731px;top:171.8px;width:16.6px;height:14.5px;background:#000;border-radius:1px;"></div>
<svg style="position:absolute;left:1731px;top:171.8px" width="17" height="15" viewBox="0 0 17 15" ><path d="M5.5 4.5L3 7.5L5.5 10.5M11.5 4.5L14 7.5L11.5 10.5M9.5 3.5L7.5 11.5" fill="none" stroke="#fff" stroke-width="1.3"/></svg>
<div style="position:absolute;left:1765.4px;top:169.5px;font-size:20.49px;line-height:20.49px;color:#111;font-weight:normal;white-space:nowrap;">ri-code-box-fill</div>
<div style="position:absolute;left:2305px;top:156px;width:27.0px;height:47.0px;background:#012469;"></div>
<svg style="position:absolute;left:2306.3px;top:170.3px" width="22" height="18" viewBox="0 0 22 18" ><rect x="1.1" y="0.9" width="19.6" height="16.4" fill="none" stroke="#fff" stroke-width="1.5"/><rect x="1.1" y="4.2" width="19.6" height="1.5" fill="#fff"/></svg>
<div style="position:absolute;left:1611.4px;top:221.6px;font-size:18.16px;line-height:18.16px;color:#1a1a1a;font-weight:normal;white-space:nowrap;">Tags:</div>
<div style="position:absolute;left:1719px;top:208.4px;width:614.3px;height:41.7px;background:#fff;box-sizing:border-box;border:1px solid #d9d9d9;"></div>
<div style="position:absolute;left:1611.4px;top:277.6px;font-size:19.03px;line-height:19.03px;color:#1a1a1a;font-weight:normal;white-space:nowrap;">Color:</div>
<div style="position:absolute;left:1719px;top:254.3px;width:614.3px;height:64.3px;background:#f4f4f4;box-sizing:border-box;border:1px solid #dddddd;"></div>
<div style="position:absolute;left:1723px;top:258px;width:80.0px;height:56.8px;background:#555555;"></div>
<div style="position:absolute;left:1730.3px;top:278.6px;font-size:20.57px;line-height:20.57px;color:#111;font-weight:normal;white-space:nowrap;">Default</div>
<div style="position:absolute;left:1812.2px;top:258.1px;width:30.0px;height:21.8px;background:#33421a;"></div>
<div style="position:absolute;left:1812.2px;top:289px;width:30.0px;height:22.6px;background:#82a82f;"></div>
<div style="position:absolute;left:1851.2px;top:258.1px;width:30.0px;height:21.8px;background:#044204;"></div>
<div style="position:absolute;left:1851.2px;top:289px;width:30.0px;height:22.6px;background:#2fa82f;"></div>
<div style="position:absolute;left:1890.2px;top:258.1px;width:30.0px;height:21.8px;background:#043f3f;"></div>
<div style="position:absolute;left:1890.2px;top:289px;width:30.0px;height:22.6px;background:#2fa8a8;"></div>
<div style="position:absolute;left:1929.2px;top:258.1px;width:30.0px;height:21.8px;background:#04163f;"></div>
<div style="position:absolute;left:1929.2px;top:289px;width:30.0px;height:22.6px;background:#2f58b0;"></div>
<div style="position:absolute;left:1968.2px;top:258.1px;width:30.0px;height:21.8px;background:#3f3f04;"></div>
<div style="position:absolute;left:1968.2px;top:289px;width:30.0px;height:22.6px;background:#aaa82f;"></div>
<div style="position:absolute;left:2007.2px;top:258.1px;width:30.0px;height:21.8px;background:#421a04;"></div>
<div style="position:absolute;left:2007.2px;top:289px;width:30.0px;height:22.6px;background:#a8582f;"></div>
<div style="position:absolute;left:2046.2px;top:258.1px;width:30.0px;height:21.8px;background:#42041a;"></div>
<div style="position:absolute;left:2046.2px;top:289px;width:30.0px;height:22.6px;background:#a82f58;"></div>
<div style="position:absolute;left:2085.2px;top:258.1px;width:30.0px;height:21.8px;background:#001a5c;"></div>
<div style="position:absolute;left:2088.2px;top:261px;width:24.0px;height:16.0px;background:#2e0442;"></div>
<div style="position:absolute;left:2085.2px;top:289px;width:30.0px;height:22.6px;background:#7f2fa8;"></div>
<div style="position:absolute;left:2124.2px;top:258.1px;width:30.0px;height:21.8px;background:#66900f;"></div>
<div style="position:absolute;left:2124.2px;top:289px;width:30.0px;height:22.6px;background:#000000;"></div>
<div style="position:absolute;left:2163.2px;top:258.1px;width:30.0px;height:21.8px;background:#0f900f;"></div>
<div style="position:absolute;left:2163.2px;top:289px;width:30.0px;height:22.6px;background:#000000;"></div>
<div style="position:absolute;left:2202.2px;top:258.1px;width:30.0px;height:21.8px;background:#045a5a;"></div>
<div style="position:absolute;left:2202.2px;top:289px;width:30.0px;height:22.6px;background:#141414;"></div>
<div style="position:absolute;left:2241.2px;top:258.1px;width:30.0px;height:21.8px;background:#0f3f9a;"></div>
<div style="position:absolute;left:2241.2px;top:289px;width:30.0px;height:22.6px;background:#353535;"></div>
<div style="position:absolute;left:2280.2px;top:258.1px;width:21.0px;height:21.8px;background:#949010;"></div>
<div style="position:absolute;left:2280.2px;top:289px;width:21.0px;height:22.6px;background:#555555;"></div>
<div style="position:absolute;left:2305px;top:256px;width:27.0px;height:60.8px;background:#012469;"></div>
<svg style="position:absolute;left:2306.3px;top:277.2px" width="22" height="18" viewBox="0 0 22 18" ><rect x="1.1" y="0.9" width="19.6" height="16.4" fill="none" stroke="#fff" stroke-width="1.5"/><rect x="1.1" y="4.2" width="19.6" height="1.5" fill="#fff"/></svg>
<div style="position:absolute;left:2334px;top:59.5px;width:18.6px;height:1251.5px;background:#ffffff;"></div>
<svg style="position:absolute;left:2336.5px;top:71px" width="14" height="8" viewBox="0 0 14 8" ><path d="M1 7.5L7 0.5L13 7.5Z" fill="#b4b4b4"/></svg>
<div style="position:absolute;left:2338.4px;top:86px;width:10.4px;height:1038.6px;background:#aaaaaa;border-radius:5px;"></div>
<svg style="position:absolute;left:2336.5px;top:1290px" width="14" height="8" viewBox="0 0 14 8" ><path d="M1 0.5L7 7.5L13 0.5Z" fill="#b4b4b4"/></svg>
<div style="position:absolute;left:1611px;top:322px;width:723.0px;height:570.5px;background:#f2f2f2;"></div>
<svg style="position:absolute;left:1616px;top:347.5px" width="16" height="10" viewBox="0 0 16 10" ><path d="M1 1L8.0 8.5L15 1" fill="none" stroke="#222" stroke-width="1.8"/></svg>
<div style="position:absolute;left:1643.0px;top:342.0px;font-size:18.51px;line-height:18.51px;color:#111;font-weight:bold;white-space:nowrap;">Induce</div>
<svg style="position:absolute;left:2303px;top:342.3px" width="22" height="22" viewBox="0 0 22 22" ><circle cx="11" cy="11" r="9.8" fill="none" stroke="#063b80" stroke-width="1.8"/><text x="11" y="16.5" text-anchor="middle" font-family="Liberation Sans" font-weight="bold" font-size="15" fill="#063b80">?</text></svg>
<div style="position:absolute;left:1623.0px;top:399.6px;font-size:18.76px;line-height:18.76px;color:#1a1a1a;font-weight:normal;white-space:nowrap;">Signal Processor:</div>
<div style="position:absolute;left:1821.4px;top:383.7px;width:509.1px;height:49.4px;background:#ffffff;box-sizing:border-box;border:1px solid #d9d9d9;"></div>
<div style="position:absolute;left:1822.4px;top:384.7px;width:41.6px;height:47.4px;background:#f2f2f2;"></div>
<svg style="position:absolute;left:1833.4px;top:400.5px" width="16" height="16" viewBox="0 0 16 16" ><rect x="1" y="1" width="14" height="14" fill="none" stroke="#222" stroke-width="1.8"/><rect x="3.5" y="3.5" width="9" height="3" fill="#222"/><path d="M4 9H6M7.5 9H9.5M11 9H12.5M4 12H6M7.5 12H9.5M11 12H12.5" stroke="#222" stroke-width="1.4"/></svg>
<div style="position:absolute;left:1870.00px;top:399.0px;width:357.0px;overflow:hidden;font-size:19.39px;line-height:19.39px;color:#111;white-space:nowrap;">Expression</div>
<div style="position:absolute;left:2236px;top:384.2px;width:29.8px;height:48.4px;background:#012469;"></div>
<svg style="position:absolute;left:2236.9px;top:394.4px" width="28" height="28" viewBox="0 0 28 28" ><path d="M3.3 22.8L5.4 17.9L18.2 5.1A2.12 2.12 0 0 1 21.2 8.1L8.4 20.9Z M5.4 17.9L8.4 20.9" fill="none" stroke="#fff" stroke-width="1.4" stroke-linejoin="round"/></svg>
<div style="position:absolute;left:2269px;top:384.2px;width:29.0px;height:48.4px;background:#012469;"></div>
<svg style="position:absolute;left:2269.5px;top:394.4px" width="28" height="28" viewBox="0 0 28 28" ><path d="M9.2 20.6L3.9 15.2L13.2 6L19.8 13L12.4 20.6M9.2 20.6H19.8M9.6 11.3L15.8 16.6" fill="none" stroke="#fff" stroke-width="1.4" stroke-linejoin="round"/></svg>
<div style="position:absolute;left:2301.6px;top:384.2px;width:27.3px;height:48.4px;background:#012469;"></div>
<svg style="position:absolute;left:2303.05px;top:399.2px" width="22" height="18" viewBox="0 0 22 18" ><rect x="1.1" y="0.9" width="19.6" height="16.4" fill="none" stroke="#fff" stroke-width="1.5"/><rect x="1.1" y="4.2" width="19.6" height="1.5" fill="#fff"/></svg>
<div style="position:absolute;left:1623.0px;top:451.7px;font-size:20.06px;line-height:20.06px;color:#1a1a1a;font-weight:normal;white-space:nowrap;">Configuration:</div>
<div style="position:absolute;left:1821.4px;top:438px;width:509.1px;height:47.3px;background:#ffffff;box-sizing:border-box;border:1px solid #d9d9d9;"></div>
<div style="position:absolute;left:1822.4px;top:439px;width:41.6px;height:45.3px;background:#f2f2f2;"></div>
<div style="position:absolute;left:1870.00px;top:451.8px;width:357.0px;overflow:hidden;font-size:19.97px;line-height:19.97px;color:#4a4a4a;white-space:nowrap;">No configuration selected - uses processor defaults</div>
<div style="position:absolute;left:2236px;top:438.5px;width:29.8px;height:46.3px;background:#4a8bc8;"></div>
<svg style="position:absolute;left:2236.9px;top:447.65px" width="28" height="28" viewBox="0 0 28 28" ><path d="M3.3 22.8L5.4 17.9L18.2 5.1A2.12 2.12 0 0 1 21.2 8.1L8.4 20.9Z M5.4 17.9L8.4 20.9" fill="none" stroke="#fff" stroke-width="1.4" stroke-linejoin="round"/></svg>
<div style="position:absolute;left:2269px;top:438.5px;width:29.0px;height:46.3px;background:#4a8bc8;"></div>
<svg style="position:absolute;left:2269.5px;top:447.65px" width="28" height="28" viewBox="0 0 28 28" ><path d="M9.2 20.6L3.9 15.2L13.2 6L19.8 13L12.4 20.6M9.2 20.6H19.8M9.6 11.3L15.8 16.6" fill="none" stroke="#fff" stroke-width="1.4" stroke-linejoin="round"/></svg>
<div style="position:absolute;left:2301.6px;top:438.5px;width:27.3px;height:46.3px;background:#012469;"></div>
<svg style="position:absolute;left:2303.05px;top:452.45px" width="22" height="18" viewBox="0 0 22 18" ><rect x="1.1" y="0.9" width="19.6" height="16.4" fill="none" stroke="#fff" stroke-width="1.5"/><rect x="1.1" y="4.2" width="19.6" height="1.5" fill="#fff"/></svg>
<div style="position:absolute;left:1623.0px;top:506.3px;font-size:18.76px;line-height:18.76px;color:#1a1a1a;font-weight:normal;white-space:nowrap;">Primary Source (s0):</div>
<div style="position:absolute;left:1821.4px;top:491.3px;width:509.1px;height:47.7px;background:#ffffff;box-sizing:border-box;border:1px solid #d9d9d9;"></div>
<div style="position:absolute;left:1822.4px;top:492.3px;width:41.6px;height:45.7px;background:#f2f2f2;"></div>
<div style="position:absolute;left:1870.00px;top:505.3px;width:357.0px;overflow:hidden;font-size:19.97px;line-height:19.97px;color:#4a4a4a;white-space:nowrap;">No primary source selected</div>
<div style="position:absolute;left:2236px;top:491.8px;width:29.8px;height:46.7px;background:#4a8bc8;"></div>
<svg style="position:absolute;left:2236.9px;top:501.15px" width="28" height="28" viewBox="0 0 28 28" ><path d="M3.3 22.8L5.4 17.9L18.2 5.1A2.12 2.12 0 0 1 21.2 8.1L8.4 20.9Z M5.4 17.9L8.4 20.9" fill="none" stroke="#fff" stroke-width="1.4" stroke-linejoin="round"/></svg>
<div style="position:absolute;left:2269px;top:491.8px;width:29.0px;height:46.7px;background:#4a8bc8;"></div>
<svg style="position:absolute;left:2269.5px;top:501.15px" width="28" height="28" viewBox="0 0 28 28" ><path d="M9.2 20.6L3.9 15.2L13.2 6L19.8 13L12.4 20.6M9.2 20.6H19.8M9.6 11.3L15.8 16.6" fill="none" stroke="#fff" stroke-width="1.4" stroke-linejoin="round"/></svg>
<div style="position:absolute;left:2301.6px;top:491.8px;width:27.3px;height:46.7px;background:#012469;"></div>
<svg style="position:absolute;left:2303.05px;top:505.95px" width="22" height="18" viewBox="0 0 22 18" ><rect x="1.1" y="0.9" width="19.6" height="16.4" fill="none" stroke="#fff" stroke-width="1.5"/><rect x="1.1" y="4.2" width="19.6" height="1.5" fill="#fff"/></svg>
<svg style="position:absolute;left:1632px;top:565.5px" width="9" height="13" viewBox="0 0 9 13" ><path d="M1 1L7.5 6.5L1 12" fill="none" stroke="#222" stroke-width="1.5"/></svg>
<div style="position:absolute;left:1654.7px;top:562.3px;font-size:18.57px;line-height:18.57px;color:#111;font-weight:bold;white-space:nowrap;">Additional Sources (s1,...)</div>
<div style="position:absolute;left:1633.8px;top:628.4px;font-size:18.89px;line-height:18.89px;color:#111;font-weight:bold;white-space:nowrap;">Processor Properties</div>
<svg style="position:absolute;left:2299.6px;top:623.3px" width="22" height="22" viewBox="0 0 22 22" ><circle cx="11" cy="11" r="9.8" fill="none" stroke="#063b80" stroke-width="1.8"/><text x="11" y="16.5" text-anchor="middle" font-family="Liberation Sans" font-weight="bold" font-size="15" fill="#063b80">?</text></svg>
<div style="position:absolute;left:1634.3px;top:690.1px;font-size:19.31px;line-height:19.31px;color:#1a1a1a;font-weight:normal;white-space:nowrap;">Signal type:</div>
<div style="position:absolute;left:1833px;top:676.4px;width:453.7px;height:43.1px;background:#ffffff;"></div>
<div style="position:absolute;left:1844.6px;top:688.8px;font-size:20.74px;line-height:20.74px;color:#111;font-weight:normal;white-space:nowrap;">Unknown/Auto</div>
<svg style="position:absolute;left:2267px;top:692px" width="15" height="9" viewBox="0 0 15 9" ><path d="M1 1L7.5 7.5L14 1" fill="none" stroke="#111" stroke-width="2"/></svg>
<div style="position:absolute;left:2290px;top:676px;width:38.0px;height:35.7px;background:#012469;"></div>
<div style="position:absolute;left:2290px;top:710.6px;width:38.0px;height:1.3px;background:#0a0a0a;"></div>
<svg style="position:absolute;left:2300px;top:686px" width="18" height="14" viewBox="0 0 18 14" ><rect x="1" y="1" width="16" height="12" rx="2" fill="none" stroke="#0a0a0a" stroke-width="1.6"/><text x="9" y="10" text-anchor="middle" font-family="Liberation Sans" font-size="7" font-weight="bold" fill="#0a0a0a">abc</text></svg>
<div style="position:absolute;left:2290px;top:715px;width:38.0px;height:34.3px;background:#d4d4d4;box-sizing:border-box;border-bottom:1.5px solid #111;"></div>
<svg style="position:absolute;left:2299px;top:725px" width="20" height="14" viewBox="0 0 20 14" ><path d="M5 2H19M5 6H19M5 10H19M5 13H19" stroke="#111" stroke-width="1.5"/><path d="M1 2H2.5M1 6H2.5M1 10H2.5M1 13H2.5" stroke="#111" stroke-width="1.5"/></svg>
<div style="position:absolute;left:1634.7px;top:795.9px;font-size:18.97px;line-height:18.97px;color:#1a1a1a;font-weight:normal;white-space:nowrap;">Expression:</div>
<div style="position:absolute;left:1833px;top:722.5px;width:453.3px;height:116.2px;background:#fff;box-sizing:border-box;border:1px solid #d9d9d9;"></div>
<svg style="position:absolute;left:2269.5px;top:730.5px" width="14" height="8" viewBox="0 0 14 8" ><path d="M0.5 7.5L7 0.5L13.5 7.5Z" fill="#ababab"/></svg>
<div style="position:absolute;left:2271px;top:746px;width:11.0px;height:66.8px;background:#a8a8a8;border-radius:5px;"></div>
<svg style="position:absolute;left:2269.5px;top:822px" width="14" height="8" viewBox="0 0 14 8" ><path d="M0.5 0.5L7 7.5L13.5 0.5Z" fill="#ababab"/></svg>
<div style="position:absolute;left:1848.7px;top:740.4px;font-size:19.2px;line-height:19.2px;color:#111;font-weight:normal;white-space:nowrap;"><span style="color:#2a6db0">var</span> <span style="color:#111">n :</span><span style="color:#b8b8b8">=</span><span style="color:#7aa86a">0</span><span style="color:#111">; </span><span style="color:#2a6db0">var</span> <span style="color:#111">sum :</span><span style="color:#b8b8b8">=</span><span style="color:#7aa86a">0.0</span><span style="color:#111">; </span><span style="color:#2e5e1e">// initialize</span></div>
<div style="position:absolute;left:1848.7px;top:762.2px;font-size:19.2px;line-height:19.2px;color:#111;font-weight:normal;white-space:nowrap;"><span style="color:#2a6db0">if</span> <span style="color:#111">((n</span><span style="color:#b8b8b8">++%2</span><span style="color:#111">)</span> <span style="color:#b8b8b8">==</span> <span style="color:#7aa86a">0</span><span style="color:#111">)</span></div>
<div style="position:absolute;left:1848.7px;top:783.9px;font-size:19.2px;line-height:19.2px;color:#111;font-weight:normal;white-space:nowrap;">&nbsp;&nbsp;<span style="color:#111">sum</span> <span style="color:#b8b8b8">=</span> <span style="color:#111">sum</span> <span style="color:#b8b8b8">+</span>&nbsp; <span style="color:#b8b8b8">*</span><span style="color:#111">s1</span> <span style="color:#b8b8b8">+</span>&nbsp; <span style="color:#b8b8b8">*</span><span style="color:#111">s2;</span></div>
<div style="position:absolute;left:1848.7px;top:805.7px;font-size:19.2px;line-height:19.2px;color:#111;font-weight:normal;white-space:nowrap;"><span style="color:#2a6db0">return</span> <span style="color:#111">sum;</span></div>
<div style="position:absolute;left:1965px;top:842.3px;width:140.0px;height:41.3px;background:#012469;"></div>
<svg style="position:absolute;left:1969.7px;top:849.2px" width="28" height="28" viewBox="0 0 28 28" ><path d="M3.3 22.8L5.4 17.9L18.2 5.1A2.12 2.12 0 0 1 21.2 8.1L8.4 20.9Z M5.4 17.9L8.4 20.9" fill="none" stroke="#fff" stroke-width="1.4" stroke-linejoin="round"/></svg>
<div style="position:absolute;left:1995.4px;top:854.3px;font-size:19.75px;line-height:19.75px;color:#fff;font-weight:normal;white-space:nowrap;">Open editor</div>
<div style="position:absolute;left:2108.2px;top:842.3px;width:178.8px;height:41.3px;background:#012469;"></div>
<svg style="position:absolute;left:2113px;top:850px" width="26" height="28" viewBox="0 0 26 28" ><path d="M9 3H21V16H16" fill="none" stroke="#fff" stroke-width="1.5"/><path d="M12 6.5L15 9.5L12 12.5" fill="none" stroke="#fff" stroke-width="1.4"/><circle cx="6.5" cy="21" r="3.5" fill="none" stroke="#fff" stroke-width="1.4"/><path d="M1 18L3 19.5M12 18L10 19.5M1 24H3M10 24H12M6.5 14.5V17" stroke="#fff" stroke-width="1.3"/></svg>
<div style="position:absolute;left:2139.2px;top:854.2px;font-size:19.8px;line-height:19.8px;color:#fff;font-weight:normal;white-space:nowrap;">Show log output</div>
<svg style="position:absolute;left:1616px;top:920.5px" width="16" height="10" viewBox="0 0 16 10" ><path d="M1 1L8.0 8.5L15 1" fill="none" stroke="#222" stroke-width="1.8"/></svg>
<div style="position:absolute;left:1642.8px;top:915.6px;font-size:19.25px;line-height:19.25px;color:#111;font-weight:bold;white-space:nowrap;">Visualize</div>
<svg style="position:absolute;left:2302.6px;top:915.9px" width="22" height="22" viewBox="0 0 22 22" ><circle cx="11" cy="11" r="9.8" fill="none" stroke="#063b80" stroke-width="1.8"/><text x="11" y="16.5" text-anchor="middle" font-family="Liberation Sans" font-weight="bold" font-size="15" fill="#063b80">?</text></svg>
<div style="position:absolute;left:1623.0px;top:976.0px;font-size:19.21px;line-height:19.21px;color:#1a1a1a;font-weight:normal;white-space:nowrap;">Diagram:</div>
<div style="position:absolute;left:1821.4px;top:960.3px;width:509.1px;height:49.8px;background:#ffffff;box-sizing:border-box;border:1px solid #d9d9d9;"></div>
<div style="position:absolute;left:1822.4px;top:961.3px;width:41.6px;height:47.8px;background:#f2f2f2;"></div>
<svg style="position:absolute;left:1828.9px;top:971px" width="25" height="25" viewBox="0 0 25 25" ><path d="M1 0V24H24" fill="none" stroke="#111" stroke-width="1.6"/><rect x="3" y="6" width="20" height="2" fill="#ddd"/><rect x="3" y="12" width="20" height="2" fill="#ddd"/><path d="M3 20C8 12 14 12 22 16" fill="none" stroke="#f07a20" stroke-width="2.4"/><path d="M4 5C7 28 11 20 13 12C15 2 19 4 22 12" fill="none" stroke="#1a5ac8" stroke-width="2.4"/></svg>
<div style="position:absolute;left:1870.00px;top:975.3px;width:357.0px;overflow:hidden;font-size:19.97px;line-height:19.97px;color:#4a4a4a;white-space:nowrap;">No diagram configured - uses ’Line Diagram’ defaults</div>
<div style="position:absolute;left:2236px;top:960.8px;width:29.8px;height:48.8px;background:#012469;"></div>
<svg style="position:absolute;left:2236.9px;top:971.2px" width="28" height="28" viewBox="0 0 28 28" ><path d="M3.3 22.8L5.4 17.9L18.2 5.1A2.12 2.12 0 0 1 21.2 8.1L8.4 20.9Z M5.4 17.9L8.4 20.9" fill="none" stroke="#fff" stroke-width="1.4" stroke-linejoin="round"/></svg>
<div style="position:absolute;left:2269px;top:960.8px;width:29.0px;height:48.8px;background:#4a8bc8;"></div>
<svg style="position:absolute;left:2269.5px;top:971.2px" width="28" height="28" viewBox="0 0 28 28" ><path d="M9.2 20.6L3.9 15.2L13.2 6L19.8 13L12.4 20.6M9.2 20.6H19.8M9.6 11.3L15.8 16.6" fill="none" stroke="#fff" stroke-width="1.4" stroke-linejoin="round"/></svg>
<div style="position:absolute;left:2301.6px;top:960.8px;width:27.3px;height:48.8px;background:#012469;"></div>
<svg style="position:absolute;left:2303.05px;top:976.0px" width="22" height="18" viewBox="0 0 22 18" ><rect x="1.1" y="0.9" width="19.6" height="16.4" fill="none" stroke="#fff" stroke-width="1.5"/><rect x="1.1" y="4.2" width="19.6" height="1.5" fill="#fff"/></svg>
<div style="position:absolute;left:1623.0px;top:1029.5px;font-size:20.06px;line-height:20.06px;color:#1a1a1a;font-weight:normal;white-space:nowrap;">Configuration:</div>
<div style="position:absolute;left:1821.4px;top:1014.5px;width:509.1px;height:49.8px;background:#ffffff;box-sizing:border-box;border:1px solid #d9d9d9;"></div>
<div style="position:absolute;left:1822.4px;top:1015.5px;width:41.6px;height:47.8px;background:#f2f2f2;"></div>
<div style="position:absolute;left:1870.00px;top:1029.5px;width:357.0px;overflow:hidden;font-size:19.97px;line-height:19.97px;color:#4a4a4a;white-space:nowrap;">No configuration selected- uses diagram defaults</div>
<div style="position:absolute;left:2236px;top:1015.0px;width:29.8px;height:48.8px;background:#4a8bc8;"></div>
<svg style="position:absolute;left:2236.9px;top:1025.4px" width="28" height="28" viewBox="0 0 28 28" ><path d="M3.3 22.8L5.4 17.9L18.2 5.1A2.12 2.12 0 0 1 21.2 8.1L8.4 20.9Z M5.4 17.9L8.4 20.9" fill="none" stroke="#fff" stroke-width="1.4" stroke-linejoin="round"/></svg>
<div style="position:absolute;left:2269px;top:1015.0px;width:29.0px;height:48.8px;background:#4a8bc8;"></div>
<svg style="position:absolute;left:2269.5px;top:1025.4px" width="28" height="28" viewBox="0 0 28 28" ><path d="M9.2 20.6L3.9 15.2L13.2 6L19.8 13L12.4 20.6M9.2 20.6H19.8M9.6 11.3L15.8 16.6" fill="none" stroke="#fff" stroke-width="1.4" stroke-linejoin="round"/></svg>
<div style="position:absolute;left:2301.6px;top:1015.0px;width:27.3px;height:48.8px;background:#012469;"></div>
<svg style="position:absolute;left:2303.05px;top:1030.2px" width="22" height="18" viewBox="0 0 22 18" ><rect x="1.1" y="0.9" width="19.6" height="16.4" fill="none" stroke="#fff" stroke-width="1.5"/><rect x="1.1" y="4.2" width="19.6" height="1.5" fill="#fff"/></svg>
<div style="position:absolute;left:1623.0px;top:1081.4px;font-size:18.43px;line-height:18.43px;color:#1a1a1a;font-weight:normal;white-space:nowrap;">Axis:</div>
<div style="position:absolute;left:1821.4px;top:1067.9px;width:509.6px;height:42.8px;background:#ffffff;"></div>
<div style="position:absolute;left:1832.7px;top:1079.2px;font-size:21.08px;line-height:21.08px;color:#111;font-weight:normal;white-space:nowrap;">Inherit</div>
<svg style="position:absolute;left:2311px;top:1083.5px" width="15" height="9" viewBox="0 0 15 9" ><path d="M1 1L7.5 7.5L14 1" fill="none" stroke="#111" stroke-width="2"/></svg>
<div style="position:absolute;left:1623.0px;top:1126.8px;font-size:19.16px;line-height:19.16px;color:#1a1a1a;font-weight:normal;white-space:nowrap;">Combine:</div>
<div style="position:absolute;left:1821.4px;top:1114px;width:509.6px;height:42.9px;background:#ffffff;"></div>
<div style="position:absolute;left:1832.7px;top:1125.9px;font-size:20.16px;line-height:20.16px;color:#111;font-weight:normal;white-space:nowrap;">Dont Combine</div>
<svg style="position:absolute;left:2311px;top:1129.5px" width="15" height="9" viewBox="0 0 15 9" ><path d="M1 1L7.5 7.5L14 1" fill="none" stroke="#111" stroke-width="2"/></svg>
<div style="position:absolute;left:1633.7px;top:1183.7px;font-size:19.21px;line-height:19.21px;color:#111;font-weight:bold;white-space:nowrap;">Diagram Properties</div>
<svg style="position:absolute;left:2299.6px;top:1179px" width="22" height="22" viewBox="0 0 22 22" ><circle cx="11" cy="11" r="9.8" fill="none" stroke="#063b80" stroke-width="1.8"/><text x="11" y="16.5" text-anchor="middle" font-family="Liberation Sans" font-weight="bold" font-size="15" fill="#063b80">?</text></svg>
<div style="position:absolute;left:1641px;top:1238.2px;width:17.8px;height:17.1px;background:#ffffff;box-sizing:border-box;border:1.6px solid #555;border-radius:3px;"></div>
<div style="position:absolute;left:1668.0px;top:1237.2px;font-size:20.51px;line-height:20.51px;color:#1a1a1a;font-weight:normal;white-space:nowrap;">Interpolated</div>
<div style="position:absolute;left:1837px;top:1238px;width:19.3px;height:18.0px;background:#ffffff;box-sizing:border-box;border:1.6px solid #555;border-radius:3px;"></div>
<div style="position:absolute;left:1864.9px;top:1237.4px;font-size:20.29px;line-height:20.29px;color:#1a1a1a;font-weight:normal;white-space:nowrap;">Annotated</div>
<div style="position:absolute;left:1641px;top:1269px;width:18.0px;height:18.0px;background:#0b4fc4;border-radius:3px;"></div>
<svg style="position:absolute;left:1641px;top:1269px" width="18" height="18" viewBox="0 0 18 18" ><path d="M3.5 9.5L7.5 13.5L14.5 4.5" fill="none" stroke="#fff" stroke-width="2.4"/></svg>
<div style="position:absolute;left:1668.0px;top:1269.2px;font-size:19.33px;line-height:19.33px;color:#1a1a1a;font-weight:normal;white-space:nowrap;">Draw Axis</div>
<div style="position:absolute;left:2290px;top:1233px;width:38.0px;height:34.6px;background:#d4d4d4;box-sizing:border-box;border-bottom:1.5px solid #111;"></div>
<svg style="position:absolute;left:2300px;top:1243px" width="18" height="14" viewBox="0 0 18 14" ><rect x="1" y="1" width="16" height="12" rx="2" fill="none" stroke="#0a0a0a" stroke-width="1.6"/><text x="9" y="10" text-anchor="middle" font-family="Liberation Sans" font-size="7" font-weight="bold" fill="#0a0a0a">abc</text></svg>
<div style="position:absolute;left:2290px;top:1271px;width:38.0px;height:35.5px;background:#d4d4d4;box-sizing:border-box;border-bottom:1.5px solid #111;"></div>
<svg style="position:absolute;left:2299px;top:1282px" width="20" height="14" viewBox="0 0 20 14" ><path d="M5 2H19M5 6H19M5 10H19M5 13H19" stroke="#111" stroke-width="1.5"/><path d="M1 2H2.5M1 6H2.5M1 10H2.5M1 13H2.5" stroke="#111" stroke-width="1.5"/></svg>
<div style="position:absolute;left:1644px;top:1306.5px;width:12.0px;height:1.0px;background:#bbbbbb;"></div>
<div style="position:absolute;left:1882px;top:1296.4px;width:187.6px;height:23.6px;background:#fff;box-sizing:border-box;border:1px solid #dadada;"></div>
<div style="position:absolute;left:2100px;top:1296.4px;width:186.4px;height:23.6px;background:#fff;box-sizing:border-box;border:1px solid #dadada;"></div>
<div style="position:absolute;left:1602.8px;top:1311px;width:374.2px;height:40.7px;background:#012469;"></div>
<div style="position:absolute;left:1756.0px;top:1321.5px;font-size:19.76px;line-height:19.76px;color:#fff;font-weight:normal;white-space:nowrap;">Discard</div>
<div style="position:absolute;left:1980px;top:1310.8px;width:372.6px;height:40.7px;background:#012469;"></div>
<div style="position:absolute;left:2141.7px;top:1321.8px;font-size:19.38px;line-height:19.38px;color:#fff;font-weight:normal;white-space:nowrap;">Close</div>
<div style="position:absolute;left:2352.6px;top:2px;width:41.4px;height:663.5px;background:#dedede;"></div>
<svg style="position:absolute;left:2365.5px;top:12px" width="20" height="18" viewBox="0 0 20 18" ><rect x="1" y="1" width="18" height="16" fill="none" stroke="#111" stroke-width="2"/><path d="M4.5 12L8 8.5L10.5 10.5L15 6M12.5 5.5H15.5V8.5" fill="none" stroke="#111" stroke-width="1.7"/></svg>
<svg style="position:absolute;left:2363.1px;top:50px" width="24" height="24" viewBox="0 0 24 24" ><path d="M7.5 4.2A9 9 0 0 1 20.6 14.2M16.5 19.8A9 9 0 0 1 3.4 9.8" fill="none" stroke="#111" stroke-width="1.9"/><path d="M17.8 12.6H23.2L20.5 17.4Z M0.8 11.4H6.2L3.5 6.6Z" fill="#111"/></svg>
<svg style="position:absolute;left:2367.5px;top:82px" width="15" height="9" viewBox="0 0 15 9" ><path d="M1 1L7.5 7.5L14 1" fill="none" stroke="#111" stroke-width="1.6"/></svg>
<svg style="position:absolute;left:2365.5px;top:122.5px" width="20" height="18" viewBox="0 0 20 18" ><rect x="1" y="1" width="18" height="16" fill="none" stroke="#111" stroke-width="2"/><path d="M9.5 1V17M1 12.5H9.5M9.5 5.5H19" fill="none" stroke="#111" stroke-width="2"/></svg>
<svg style="position:absolute;left:2367.5px;top:151px" width="15" height="9" viewBox="0 0 15 9" ><path d="M1 1L7.5 7.5L14 1" fill="none" stroke="#111" stroke-width="1.6"/></svg>
<svg style="position:absolute;left:2365.5px;top:191px" width="20" height="18" viewBox="0 0 20 18" ><path d="M1 17V2H7L9 4H19V17Z" fill="none" stroke="#7a7a7a" stroke-width="1.6"/><path d="M10 14V8M7 10.5L10 7.5L13 10.5" fill="none" stroke="#7a7a7a" stroke-width="1.5"/></svg>
<svg style="position:absolute;left:2364px;top:230.5px" width="22" height="22" viewBox="0 0 22 22" ><path d="M1.5 15L15 1.5L20.5 7L7 20.5Z" fill="none" stroke="#111" stroke-width="2"/><path d="M6 11L8 13M9 8L11 10M12 5L14 7" stroke="#111" stroke-width="1.5"/></svg>
<svg style="position:absolute;left:2367.5px;top:261px" width="15" height="9" viewBox="0 0 15 9" ><path d="M1 1L7.5 7.5L14 1" fill="none" stroke="#111" stroke-width="1.6"/></svg>
<svg style="position:absolute;left:2364px;top:299.5px" width="22" height="22" viewBox="0 0 22 22" ><circle cx="9" cy="9" r="7.5" fill="none" stroke="#111" stroke-width="1.8"/><path d="M14.5 14.5L20.5 20.5M5 9H13M9 5V13" stroke="#111" stroke-width="1.8"/></svg>
<svg style="position:absolute;left:2364px;top:340.5px" width="22" height="22" viewBox="0 0 22 22" ><path d="M1 5H21M1 17H21M5 1V21M17 1V21" fill="none" stroke="#111" stroke-width="1.9"/></svg>
<svg style="position:absolute;left:2364px;top:381.5px" width="22" height="22" viewBox="0 0 22 22" ><circle cx="9" cy="9" r="7.5" fill="none" stroke="#111" stroke-width="1.8"/><path d="M14.5 14.5L20.5 20.5M5 9H13" stroke="#111" stroke-width="1.8"/></svg>
<svg style="position:absolute;left:2367px;top:425px" width="16" height="16" viewBox="0 0 16 16" ><path d="M1.5 0.5V15.5M14.5 1L4 8L14.5 15Z" fill="none" stroke="#111" stroke-width="1.8"/></svg>
<svg style="position:absolute;left:2367px;top:465.5px" width="16" height="18" viewBox="0 0 16 18" ><path d="M12 0.5V17.5L3 9Z" fill="#111"/></svg>
<svg style="position:absolute;left:2368px;top:508px" width="16" height="18" viewBox="0 0 16 18" ><path d="M4 0.5V17.5L13 9Z" fill="#111"/></svg>
<svg style="position:absolute;left:2368px;top:549px" width="16" height="16" viewBox="0 0 16 16" ><path d="M14.5 0.5V15.5M1.5 1L12 8L1.5 15Z" fill="none" stroke="#111" stroke-width="1.8"/></svg>
<svg style="position:absolute;left:2365px;top:589.5px" width="22" height="18" viewBox="0 0 22 18" ><path d="M2 2H20M2 8.5H7M2 14.5H7" stroke="#111" stroke-width="1.8"/><circle cx="14.5" cy="12" r="3.3" fill="none" stroke="#111" stroke-width="2.4"/></svg>
<div style="position:absolute;left:2369px;top:640px;color:#f8f8f8;font-size:12px;letter-spacing:1px">...</div>
</body></html>
